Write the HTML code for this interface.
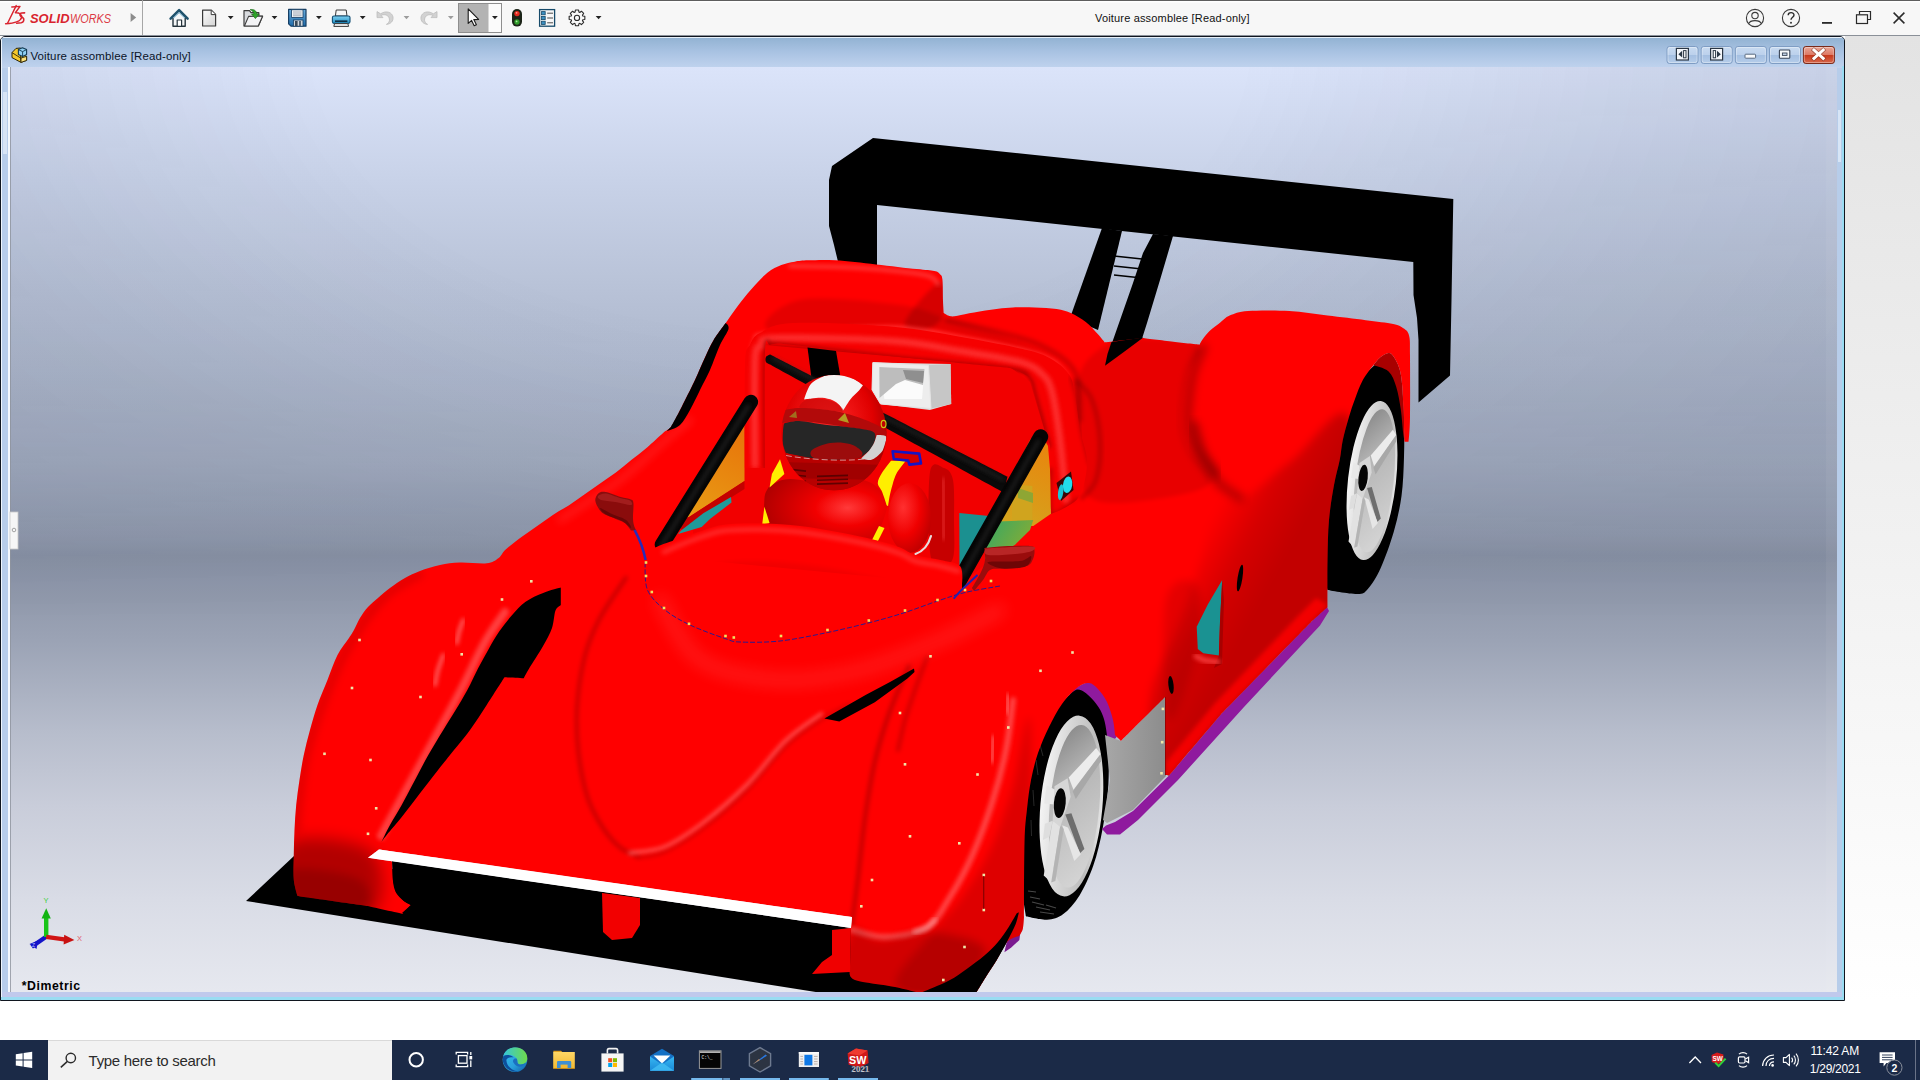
<!DOCTYPE html>
<html lang="en">
<head>
<meta charset="utf-8">
<title>Voiture assomblee [Read-only]</title>
<style>
html,body{margin:0;padding:0;}
body{width:1920px;height:1080px;overflow:hidden;background:#fff;position:relative;font-family:"Liberation Sans",sans-serif;color:#000;}
.abs{position:absolute;}
#topbar{left:0;top:0;width:1920px;height:36px;background:linear-gradient(#ffffff 0,#ffffff 1px,#f7f7f7 2px,#f7f7f7 100%);border-top:1px solid #5e5e5e;box-sizing:border-box;}
#topsep{left:142px;top:0px;width:1px;height:36px;background:#a6a6a6;}
#topline{left:0;top:35px;width:1920px;height:1px;background:#8a9098;}
#rightpanel{left:1845px;top:36px;width:75px;height:965px;background:linear-gradient(#e3e3e3 0%,#f1f1f1 52%,#ffffff 100%);}
#docwin{left:0;top:36px;width:1845px;height:965px;box-sizing:border-box;border:1px solid #10161f;border-radius:5px 5px 0 0;background:#b7cdea;overflow:hidden;}
#doctitle{left:0;top:0;width:1843px;height:31px;background:linear-gradient(#93b3d3 0%,#a8c2e2 45%,#c0d3ee 100%);border-top:1px solid #e8f1fa;border-left:1px solid #e8f1fa;box-sizing:border-box;}
#doctext{left:30.4px;top:48.5px;font-size:11.5px;line-height:14px;color:#0a1428;white-space:nowrap;letter-spacing:0.135px;}
#apptitle{left:1095px;top:11px;font-size:11px;line-height:14px;color:#111;white-space:nowrap;letter-spacing:0.17px;}
#viewtext{left:21.8px;top:979.3px;font-size:12.3px;line-height:14px;font-weight:bold;color:#000;white-space:nowrap;letter-spacing:0.54px;}
#taskbar{left:0;top:1040px;width:1920px;height:40px;background:#1b2a47;}
#search{left:48px;top:1040px;width:344px;height:40px;background:#f2f2f2;border-top:1px solid #d9d9d9;box-sizing:border-box;}
#searchtext{left:88.6px;top:1052px;font-size:15px;line-height:17px;color:#2b2b2b;white-space:nowrap;letter-spacing:-0.3px;}
.clk{color:#fff;font-size:12px;line-height:14px;white-space:nowrap;text-align:center;width:70px;left:1799px;}
svg{position:absolute;left:0;top:0;}
</style>
</head>
<body>
<div id="rightpanel" class="abs"></div>
<div id="topbar" class="abs"></div>
<div id="topsep" class="abs"></div>
<div id="topline" class="abs"></div>
<div id="docwin" class="abs"><div id="doctitle" class="abs"></div></div>

<!--SCENE-->
<svg id="scene" width="1920" height="1080" viewBox="0 0 1920 1080">
<defs>
<linearGradient id="bgv" x1="0" y1="67" x2="0" y2="992" gradientUnits="userSpaceOnUse">
<stop offset="0" stop-color="#dbe4fa"/>
<stop offset="0.122" stop-color="#c8d2e8"/>
<stop offset="0.241" stop-color="#b8c2d7"/>
<stop offset="0.321" stop-color="#aeb8cd"/>
<stop offset="0.427" stop-color="#9fa9bd"/>
<stop offset="0.507" stop-color="#8e97ab"/>
<stop offset="0.528" stop-color="#8790a3"/>
<stop offset="0.62" stop-color="#9ba3b5"/>
<stop offset="0.72" stop-color="#b7bdcc"/>
<stop offset="0.8" stop-color="#c9cdda"/>
<stop offset="0.9" stop-color="#d9dce6"/>
<stop offset="1" stop-color="#e6e8ef"/>
</linearGradient>
<clipPath id="vp"><rect x="10" y="67" width="1827" height="925"/></clipPath>
<radialGradient id="vig" cx="780" cy="40" r="1150" gradientUnits="userSpaceOnUse" gradientTransform="translate(780 40) scale(1 0.62) translate(-780 -40)">
<stop offset="0" stop-color="#101830" stop-opacity="0"/><stop offset="0.4" stop-color="#101830" stop-opacity="0"/><stop offset="0.75" stop-color="#101830" stop-opacity="0.07"/><stop offset="1" stop-color="#101830" stop-opacity="0.10"/></radialGradient>
<linearGradient id="vigm" x1="0" y1="67" x2="0" y2="620" gradientUnits="userSpaceOnUse"><stop offset="0" stop-color="#fff"/><stop offset="0.6" stop-color="#fff" stop-opacity="0.8"/><stop offset="1" stop-color="#fff" stop-opacity="0"/></linearGradient>
<mask id="vigmask" maskUnits="userSpaceOnUse" x="10" y="67" width="1827" height="925"><rect x="10" y="67" width="1827" height="560" fill="url(#vigm)"/></mask>
</defs>
<rect x="8" y="67" width="2" height="925" fill="#f4f8fd"/>
<rect x="1" y="40" width="1" height="957" fill="#eef5fc"/>
<rect x="1" y="997" width="1843" height="3" fill="#9adcf2"/>
<rect x="1842" y="66" width="2" height="934" fill="#9adcf2"/>
<rect x="2" y="992" width="1840" height="5" fill="#c0c9ec"/>
<rect x="10" y="67" width="1827" height="925" fill="url(#bgv)"/>
<rect x="10" y="67" width="1827" height="560" fill="url(#vig)" mask="url(#vigmask)"/>
<rect x="1826" y="67" width="11" height="925" fill="#fff" opacity="0.05"/>
<rect x="10" y="67" width="1" height="925" fill="#8e949e" opacity="0.8"/>
<g clip-path="url(#vp)" id="car">
<defs>
<linearGradient id="gSide" x1="1200" y1="470" x2="1260" y2="640" gradientUnits="userSpaceOnUse">
<stop offset="0" stop-color="#000" stop-opacity="0"/><stop offset="0.45" stop-color="#000" stop-opacity="0.2"/><stop offset="1" stop-color="#000" stop-opacity="0.22"/></linearGradient>
<linearGradient id="gRim" x1="0" y1="0" x2="1" y2="0">
<stop offset="0" stop-color="#f4f4f4"/><stop offset="0.35" stop-color="#d9d9d9"/><stop offset="0.8" stop-color="#bcbcbc"/><stop offset="1" stop-color="#e6e6e6"/></linearGradient>
<linearGradient id="gGray" x1="0" y1="0" x2="1" y2="0"><stop offset="0" stop-color="#a8a8a8"/><stop offset="1" stop-color="#8c8c8c"/></linearGradient>
<radialGradient id="gHelm" cx="0.45" cy="0.4" r="0.6"><stop offset="0" stop-color="#ff2a2a"/><stop offset="0.7" stop-color="#e00000"/><stop offset="1" stop-color="#a80000"/></radialGradient>
</defs>
<path d="M246.0,901.0L294.0,856.0L400.0,870.0L860.0,930.0L1018.9,912.0L1015.5,924.4L1006.7,942.2L996.7,960.0L986.7,975.5L976.0,993.0L822.0,993.0Z" fill="#000" />
<path d="M873.0,138.0L1453.3,199.0L1451.5,300.0L1450.0,375.5L1418.5,402.5L1418.5,340.0L1417.0,318.0L1413.5,295.0L1413.3,262.0L877.0,205.0L877.0,270.0L840.0,270.0L834.0,245.0L829.0,226.0L829.0,180.0L832.0,166.0Z" fill="#000" />
<path d="M1102.0,228.0L1122.0,231.0L1098.0,330.0L1070.0,318.0Z" fill="#000" />
<path d="M1153.0,234.0L1173.0,236.0L1160.0,280.0L1147.0,323.0L1140.0,345.0L1104.0,368.0L1112.0,343.0L1133.0,283.0L1143.0,253.0Z" fill="#000" />
<line x1="1114" y1="256" x2="1142" y2="259" stroke="#000" stroke-width="1.6"/>
<line x1="1114" y1="266" x2="1142" y2="269" stroke="#000" stroke-width="1.6"/>
<line x1="1114" y1="275" x2="1142" y2="278" stroke="#000" stroke-width="1.6"/>
<path d="M1070.0,692.0C1072.5,689.5 1084.2,682.7 1089.0,682.0C1093.8,681.3 1095.8,684.7 1099.0,688.0C1102.2,691.3 1105.5,696.7 1108.0,702.0C1110.5,707.3 1112.6,714.2 1114.0,720.0C1115.4,725.8 1118.2,733.3 1116.5,737.0C1114.8,740.7 1107.1,744.5 1104.0,742.0C1100.9,739.5 1100.0,728.0 1098.0,722.0C1096.0,716.0 1094.3,710.0 1092.0,706.0C1089.7,702.0 1087.0,699.5 1084.0,698.0C1081.0,696.5 1076.3,698.0 1074.0,697.0C1071.7,696.0 1067.5,694.5 1070.0,692.0Z" fill="#8f1a9e" />
<defs><linearGradient id="gDish" x1="0.3" y1="0" x2="0.6" y2="1"><stop offset="0" stop-color="#8a8a8a"/><stop offset="0.35" stop-color="#b6b6b6"/><stop offset="1" stop-color="#d4d4d4"/></linearGradient></defs>
<path d="M1375.5,364.6C1383.2,358.7 1383.0,363.5 1386.0,364.6C1389.0,365.7 1391.1,366.4 1393.7,371.0C1396.3,375.6 1399.8,384.2 1401.5,392.0C1403.2,399.8 1403.6,407.2 1404.0,418.0C1404.4,428.8 1404.4,444.0 1404.0,457.0C1403.6,470.0 1403.2,483.5 1401.5,496.0C1399.8,508.5 1397.2,520.0 1393.7,532.0C1390.2,544.0 1385.0,558.5 1380.7,568.0C1376.4,577.5 1371.7,584.7 1367.8,589.0C1363.9,593.3 1364.1,593.8 1357.4,594.0C1350.7,594.2 1327.6,590.0 1327.6,590.0C1327.6,590.0 1320.0,560.0 1320.0,560.0C1320.0,560.0 1320.0,480.0 1320.0,480.0C1320.0,480.0 1340.0,400.0 1340.0,400.0C1340.0,400.0 1367.8,370.5 1375.5,364.6Z" fill="#000" />
<g transform="rotate(6.40 1372.0 480.5)">
<ellipse cx="1372.0" cy="480.5" rx="24.0" ry="80.0" fill="url(#gRim)"/>
<ellipse cx="1374.4" cy="480.5" rx="19.2" ry="72.0" fill="url(#gDish)"/>
</g>
<path d="M1370.7,455.4L1392.9,429.7L1396.2,434.9L1374.1,466.2Z" fill="#ececec" />
<path d="M1373.4,467.8L1396.2,434.9L1396.2,441.4L1375.6,474.5Z" fill="#a8a8a8" />
<path d="M1367.1,488.0L1371.8,486.9L1380.8,518.5L1377.2,522.1Z" fill="#6e6e6e" />
<path d="M1364.3,497.3L1368.7,499.4L1377.9,523.0L1372.6,528.9Z" fill="#e6e6e6" />
<path d="M1357.0,493.3L1362.9,497.2L1354.1,547.7L1348.5,541.5Z" fill="#e2e2e2" />
<path d="M1362.9,497.2L1365.4,500.7L1357.4,546.5L1354.1,547.7Z" fill="#b4b4b4" />
<path d="M1353.5,462.3L1360.3,466.3L1358.9,479.0L1351.0,478.1Z" fill="#e8e8e8" />
<path d="M1351.0,495.9L1357.0,493.3L1354.0,507.5L1348.9,510.1Z" fill="#dedede" />
<path d="M1359.5,463.0L1369.9,456.1L1371.7,472.4L1362.7,498.8L1357.0,493.3Z" fill="#d6d6d6" />
<ellipse cx="1363.1" cy="477.9" rx="4.6" ry="13.2" fill="#050505" transform="rotate(6.4 1363.1 477.9)"/>
<path d="M1404.6,441.7C1404.6,441.7 1404.3,434.1 1403.9,424.9C1403.5,415.7 1403.1,396.1 1402.3,386.7C1401.5,377.3 1400.8,373.4 1399.3,368.3C1397.8,363.2 1395.0,358.7 1393.2,356.1C1391.4,353.6 1390.8,352.8 1388.6,353.0C1386.4,353.2 1382.5,355.4 1380.0,357.5C1377.5,359.6 1373.3,365.3 1373.3,365.3C1373.3,365.3 1384.8,367.8 1388.6,371.4C1392.4,375.0 1394.2,380.3 1396.2,386.7C1398.2,393.1 1399.7,402.0 1400.8,409.6C1401.9,417.2 1402.5,427.1 1403.1,432.5C1403.7,437.9 1404.6,441.7 1404.6,441.7Z" fill="#a80000" />
<path d="M1081.8,690.4C1087.2,692.7 1096.0,702.1 1100.3,710.0C1104.5,717.9 1105.9,725.5 1107.3,737.9C1108.7,750.3 1109.2,769.1 1108.4,784.2C1107.6,799.3 1105.2,814.8 1102.7,828.3C1100.2,841.8 1097.3,854.1 1093.4,865.3C1089.5,876.5 1084.5,887.3 1079.5,895.4C1074.5,903.5 1068.7,910.0 1063.3,914.0C1057.9,918.0 1053.2,919.3 1047.0,919.7C1040.8,920.1 1026.0,916.3 1026.0,916.3C1026.0,916.3 1020.0,880.0 1020.0,880.0C1020.0,880.0 1020.0,800.0 1020.0,800.0C1020.0,800.0 1040.0,730.0 1040.0,730.0C1040.0,730.0 1060.9,702.8 1067.9,696.2C1074.9,689.6 1076.4,688.1 1081.8,690.4Z" fill="#000" />
<g transform="rotate(5.10 1071.4 806.0)">
<ellipse cx="1071.4" cy="806.0" rx="31.0" ry="90.7" fill="url(#gRim)"/>
<ellipse cx="1074.5" cy="806.0" rx="24.8" ry="81.6" fill="url(#gDish)"/>
</g>
<path d="M1068.7,777.5L1096.2,748.1L1100.6,754.0L1073.5,789.8Z" fill="#ececec" />
<path d="M1072.7,791.5L1100.6,754.0L1100.9,761.3L1075.8,799.1Z" fill="#a8a8a8" />
<path d="M1065.3,814.6L1071.4,813.3L1084.4,849.0L1079.9,853.2Z" fill="#6e6e6e" />
<path d="M1062.2,825.2L1067.9,827.5L1080.8,854.2L1074.3,860.9Z" fill="#e6e6e6" />
<path d="M1052.7,820.7L1060.4,825.0L1051.2,882.5L1043.7,875.5Z" fill="#e2e2e2" />
<path d="M1060.4,825.0L1063.7,829.0L1055.4,881.1L1051.2,882.5Z" fill="#b4b4b4" />
<path d="M1046.8,785.6L1055.7,790.0L1054.4,804.5L1044.2,803.6Z" fill="#e8e8e8" />
<path d="M1044.9,823.7L1052.7,820.7L1049.4,836.8L1042.9,839.9Z" fill="#dedede" />
<path d="M1054.5,786.3L1067.6,778.3L1070.7,796.8L1060.2,826.9L1052.7,820.7Z" fill="#d6d6d6" />
<ellipse cx="1059.8" cy="803.1" rx="5.9" ry="15.0" fill="#050505" transform="rotate(5.1 1059.8 803.1)"/>
<path d="M1030.0,897.0 L1040.0,899.0" stroke="#5a5a5a" stroke-width="1.1" opacity="0.8"/>
<path d="M1032.0,902.0 L1044.0,905.0" stroke="#5a5a5a" stroke-width="1.1" opacity="0.8"/>
<path d="M1036.0,907.0 L1050.0,910.0" stroke="#5a5a5a" stroke-width="1.1" opacity="0.8"/>
<path d="M1040.0,912.0 L1054.0,914.0" stroke="#5a5a5a" stroke-width="1.1" opacity="0.8"/>
<path d="M1028.0,891.0 L1036.0,892.0" stroke="#5a5a5a" stroke-width="1.1" opacity="0.8"/>
<path d="M1046.0,905.0 L1056.0,908.0" stroke="#5a5a5a" stroke-width="1.1" opacity="0.8"/>
<path d="M1036.0,760.0 L1038.0,775.0" stroke="#3a3a3a" stroke-width="1" opacity="0.7"/>
<path d="M1033.0,790.0 L1034.0,806.0" stroke="#3a3a3a" stroke-width="1" opacity="0.7"/>
<path d="M1031.0,820.0 L1031.5,836.0" stroke="#3a3a3a" stroke-width="1" opacity="0.7"/>
<path d="M1040.0,745.0 L1043.0,756.0" stroke="#3a3a3a" stroke-width="1" opacity="0.7"/>
<path d="M1105.0,735.0L1121.0,741.0L1165.0,696.0L1166.0,776.0L1133.0,810.0L1107.0,823.0L1103.0,820.0L1110.0,780.0Z" fill="url(#gGray)" />
<path d="M1327.0,607.0L1311.0,622.0L1222.0,713.0L1169.0,775.5L1133.0,811.0L1115.0,822.0L1106.0,825.5L1102.0,829.0L1107.0,834.5L1120.0,834.5L1138.0,820.0L1178.0,780.0L1244.0,707.0L1320.0,625.5L1329.0,611.0Z" fill="#8f1a9e" />
<path d="M1020.5,931.0L1019.4,940.0L1011.0,947.8L1004.4,952.2L1006.7,942.2L1015.0,926.0Z" fill="#7a1a90" />
<clipPath id="bodyclip"><path d="M794.8,261.7C799.3,260.9 801.5,260.5 808.3,260.3C815.1,260.1 824.1,259.6 835.4,260.3C846.7,261.0 862.5,262.9 876.0,264.4C889.5,265.9 907.0,268.0 916.7,269.1C926.4,270.2 930.5,270.3 934.3,271.1C938.1,271.9 938.4,272.5 939.7,273.9C941.1,275.3 941.9,274.8 942.4,279.3C942.9,283.8 942.8,295.3 943.0,300.9C943.2,306.5 943.7,313.1 943.7,313.1C943.7,313.1 947.8,315.6 947.8,315.6C947.8,315.6 951.0,316.7 954.6,316.3C958.2,315.9 963.1,314.4 969.2,313.3C975.3,312.2 983.7,310.7 991.0,309.7C998.3,308.7 1005.6,307.9 1012.9,307.5C1020.2,307.1 1027.5,307.2 1034.8,307.5C1042.1,307.8 1050.6,308.0 1056.7,309.0C1062.8,310.0 1066.5,311.1 1071.3,313.3C1076.1,315.5 1081.4,318.7 1085.8,322.1C1090.2,325.5 1094.3,330.4 1097.5,333.8C1100.7,337.2 1104.8,342.5 1104.8,342.5C1104.8,342.5 1142.7,338.1 1142.7,338.1C1142.7,338.1 1163.8,340.7 1173.3,341.8C1182.8,342.9 1199.6,344.7 1199.6,344.7C1199.6,344.7 1200.8,341.9 1202.5,339.6C1204.2,337.3 1206.9,333.6 1209.8,330.8C1212.7,328.0 1216.7,325.3 1220.0,322.8C1223.3,320.3 1225.0,317.6 1229.7,315.6C1234.4,313.6 1238.1,311.8 1248.0,311.0C1257.9,310.2 1276.0,310.2 1289.3,311.0C1302.5,311.8 1314.8,314.1 1327.5,315.6C1340.2,317.1 1354.8,318.8 1365.7,320.2C1376.7,321.6 1386.8,322.6 1393.2,324.0C1399.6,325.4 1401.2,326.6 1403.9,328.6C1406.6,330.6 1408.2,331.6 1409.2,336.2C1410.2,340.8 1409.9,342.5 1410.0,356.0C1410.1,369.5 1410.2,402.7 1410.0,417.0C1409.8,431.3 1408.5,441.7 1408.5,441.7C1408.5,441.7 1404.6,441.7 1404.6,441.7C1404.6,441.7 1404.3,434.1 1403.9,424.9C1403.5,415.7 1403.1,396.1 1402.3,386.7C1401.5,377.3 1400.8,373.4 1399.3,368.3C1397.8,363.2 1395.0,358.7 1393.2,356.1C1391.4,353.6 1390.8,352.8 1388.6,353.0C1386.4,353.2 1382.5,355.4 1380.0,357.5C1377.5,359.6 1373.3,365.3 1373.3,365.3C1373.3,365.3 1365.6,374.9 1362.6,380.5C1359.5,386.1 1357.3,392.8 1355.0,398.9C1352.7,405.0 1350.9,410.3 1348.9,417.2C1346.9,424.1 1344.3,433.0 1342.8,440.1C1341.3,447.2 1341.2,452.5 1339.7,460.0C1338.2,467.5 1335.8,475.0 1334.0,485.0C1332.2,495.0 1330.1,507.5 1329.0,520.0C1327.9,532.5 1327.8,545.5 1327.5,560.0C1327.2,574.5 1327.5,607.0 1327.5,607.0C1327.5,607.0 1311.0,622.0 1311.0,622.0C1311.0,622.0 1222.0,713.0 1222.0,713.0C1222.0,713.0 1169.0,775.5 1169.0,775.5C1169.0,775.5 1165.0,775.0 1165.0,775.0C1165.0,775.0 1165.0,697.0 1165.0,697.0C1165.0,697.0 1121.0,741.0 1121.0,741.0C1121.0,741.0 1115.0,735.0 1115.0,735.0C1115.0,735.0 1114.3,725.5 1113.0,720.0C1111.7,714.5 1109.5,707.2 1107.0,702.0C1104.5,696.8 1101.0,692.2 1098.0,689.0C1095.0,685.8 1092.3,683.3 1089.0,683.0C1085.7,682.7 1082.5,683.5 1078.0,687.0C1073.5,690.5 1066.8,697.3 1062.0,704.0C1057.2,710.7 1053.0,718.8 1049.0,727.0C1045.0,735.2 1041.0,744.2 1038.0,753.0C1035.0,761.8 1032.8,770.7 1031.0,780.0C1029.2,789.3 1028.1,798.7 1027.0,809.0C1025.9,819.3 1025.0,824.0 1024.5,842.0C1024.0,860.0 1024.0,916.7 1024.0,916.7C1024.0,916.7 1023.6,925.8 1022.8,929.0C1022.0,932.2 1019.0,936.0 1019.0,936.0C1019.0,936.0 1010.4,938.2 1006.7,942.2C1003.0,946.2 1000.0,954.5 996.7,960.0C993.4,965.5 990.2,970.0 986.7,975.5C983.2,981.0 976.0,993.0 976.0,993.0C976.0,993.0 920.0,993.0 920.0,993.0C920.0,993.0 905.8,989.2 895.0,987.0C884.2,984.8 862.5,982.8 855.0,980.0C847.5,977.2 850.0,970.0 850.0,970.0C850.0,970.0 851.0,928.0 851.0,928.0C851.0,928.0 852.0,917.0 852.0,917.0C852.0,917.0 379.0,849.5 379.0,849.5C379.0,849.5 368.0,857.8 368.0,857.8C368.0,857.8 392.5,861.5 392.5,861.5C392.5,861.5 392.4,875.8 393.0,881.0C393.6,886.2 394.2,889.2 396.0,892.5C397.8,895.8 401.2,898.9 403.8,901.0C406.2,903.1 411.0,905.0 411.0,905.0C411.0,905.0 402.5,913.8 402.5,913.8C402.5,913.8 367.5,906.0 367.5,906.0C367.5,906.0 297.5,896.0 297.5,896.0C297.5,896.0 294.4,886.8 293.8,880.0C293.1,873.2 293.6,863.3 293.8,855.0C293.9,846.7 294.1,838.3 294.5,830.0C294.9,821.7 295.4,813.3 296.2,805.0C297.1,796.7 298.2,788.3 299.5,780.0C300.8,771.7 302.0,763.3 303.8,755.0C305.5,746.7 307.7,738.3 310.0,730.0C312.3,721.7 314.6,713.3 317.5,705.0C320.4,696.7 324.2,688.3 327.5,680.0C330.8,671.7 333.9,662.0 337.5,655.0C341.1,648.0 346.2,642.2 349.0,638.0C351.8,633.8 352.2,633.3 354.0,630.0C355.8,626.7 357.7,621.8 360.0,618.0C362.3,614.2 365.0,610.3 368.0,607.0C371.0,603.7 374.3,601.2 378.0,598.0C381.7,594.8 385.5,591.3 390.0,588.0C394.5,584.7 400.0,580.8 405.0,578.0C410.0,575.2 414.2,573.2 420.0,571.0C425.8,568.8 433.3,566.4 440.0,565.0C446.7,563.6 452.2,562.8 460.0,562.5C467.8,562.2 480.3,564.0 486.7,563.3C493.1,562.6 495.1,560.6 498.3,558.3C501.5,556.0 501.8,553.1 505.7,549.5C509.6,545.9 516.2,540.8 521.5,536.9C526.8,533.0 532.0,529.6 537.2,525.9C542.4,522.2 547.6,518.3 552.9,514.9C558.1,511.5 563.5,508.8 568.7,505.4C574.0,502.0 579.2,498.1 584.4,494.4C589.6,490.7 594.9,487.1 600.1,483.4C605.4,479.7 610.6,476.3 615.9,472.4C621.1,468.5 626.4,464.0 631.6,459.8C636.9,455.6 642.1,451.7 647.4,447.2C652.6,442.7 659.2,436.4 663.1,433.0C667.0,429.6 668.4,430.2 671.0,426.8C673.6,423.4 676.4,417.1 678.8,412.6C681.1,408.1 682.4,405.4 685.1,400.0C687.8,394.6 691.7,387.1 695.0,380.0C698.3,372.9 701.9,364.1 705.0,357.5C708.1,350.9 709.8,346.2 713.5,340.2C717.2,334.1 722.5,327.5 727.0,321.2C731.5,314.9 736.1,308.2 740.6,302.3C745.1,296.4 749.7,291.0 754.2,286.0C758.7,281.0 763.2,276.0 767.7,272.5C772.2,269.0 776.8,266.8 781.3,265.0C785.8,263.2 790.3,262.5 794.8,261.7Z"/></clipPath>
<filter id="b2" x="-20%" y="-20%" width="140%" height="140%"><feGaussianBlur stdDeviation="2"/></filter>
<filter id="b4" x="-20%" y="-20%" width="140%" height="140%"><feGaussianBlur stdDeviation="4"/></filter>
<filter id="b8" x="-30%" y="-30%" width="160%" height="160%"><feGaussianBlur stdDeviation="8"/></filter>
<path d="M794.8,261.7C799.3,260.9 801.5,260.5 808.3,260.3C815.1,260.1 824.1,259.6 835.4,260.3C846.7,261.0 862.5,262.9 876.0,264.4C889.5,265.9 907.0,268.0 916.7,269.1C926.4,270.2 930.5,270.3 934.3,271.1C938.1,271.9 938.4,272.5 939.7,273.9C941.1,275.3 941.9,274.8 942.4,279.3C942.9,283.8 942.8,295.3 943.0,300.9C943.2,306.5 943.7,313.1 943.7,313.1C943.7,313.1 947.8,315.6 947.8,315.6C947.8,315.6 951.0,316.7 954.6,316.3C958.2,315.9 963.1,314.4 969.2,313.3C975.3,312.2 983.7,310.7 991.0,309.7C998.3,308.7 1005.6,307.9 1012.9,307.5C1020.2,307.1 1027.5,307.2 1034.8,307.5C1042.1,307.8 1050.6,308.0 1056.7,309.0C1062.8,310.0 1066.5,311.1 1071.3,313.3C1076.1,315.5 1081.4,318.7 1085.8,322.1C1090.2,325.5 1094.3,330.4 1097.5,333.8C1100.7,337.2 1104.8,342.5 1104.8,342.5C1104.8,342.5 1142.7,338.1 1142.7,338.1C1142.7,338.1 1163.8,340.7 1173.3,341.8C1182.8,342.9 1199.6,344.7 1199.6,344.7C1199.6,344.7 1200.8,341.9 1202.5,339.6C1204.2,337.3 1206.9,333.6 1209.8,330.8C1212.7,328.0 1216.7,325.3 1220.0,322.8C1223.3,320.3 1225.0,317.6 1229.7,315.6C1234.4,313.6 1238.1,311.8 1248.0,311.0C1257.9,310.2 1276.0,310.2 1289.3,311.0C1302.5,311.8 1314.8,314.1 1327.5,315.6C1340.2,317.1 1354.8,318.8 1365.7,320.2C1376.7,321.6 1386.8,322.6 1393.2,324.0C1399.6,325.4 1401.2,326.6 1403.9,328.6C1406.6,330.6 1408.2,331.6 1409.2,336.2C1410.2,340.8 1409.9,342.5 1410.0,356.0C1410.1,369.5 1410.2,402.7 1410.0,417.0C1409.8,431.3 1408.5,441.7 1408.5,441.7C1408.5,441.7 1404.6,441.7 1404.6,441.7C1404.6,441.7 1404.3,434.1 1403.9,424.9C1403.5,415.7 1403.1,396.1 1402.3,386.7C1401.5,377.3 1400.8,373.4 1399.3,368.3C1397.8,363.2 1395.0,358.7 1393.2,356.1C1391.4,353.6 1390.8,352.8 1388.6,353.0C1386.4,353.2 1382.5,355.4 1380.0,357.5C1377.5,359.6 1373.3,365.3 1373.3,365.3C1373.3,365.3 1365.6,374.9 1362.6,380.5C1359.5,386.1 1357.3,392.8 1355.0,398.9C1352.7,405.0 1350.9,410.3 1348.9,417.2C1346.9,424.1 1344.3,433.0 1342.8,440.1C1341.3,447.2 1341.2,452.5 1339.7,460.0C1338.2,467.5 1335.8,475.0 1334.0,485.0C1332.2,495.0 1330.1,507.5 1329.0,520.0C1327.9,532.5 1327.8,545.5 1327.5,560.0C1327.2,574.5 1327.5,607.0 1327.5,607.0C1327.5,607.0 1311.0,622.0 1311.0,622.0C1311.0,622.0 1222.0,713.0 1222.0,713.0C1222.0,713.0 1169.0,775.5 1169.0,775.5C1169.0,775.5 1165.0,775.0 1165.0,775.0C1165.0,775.0 1165.0,697.0 1165.0,697.0C1165.0,697.0 1121.0,741.0 1121.0,741.0C1121.0,741.0 1115.0,735.0 1115.0,735.0C1115.0,735.0 1114.3,725.5 1113.0,720.0C1111.7,714.5 1109.5,707.2 1107.0,702.0C1104.5,696.8 1101.0,692.2 1098.0,689.0C1095.0,685.8 1092.3,683.3 1089.0,683.0C1085.7,682.7 1082.5,683.5 1078.0,687.0C1073.5,690.5 1066.8,697.3 1062.0,704.0C1057.2,710.7 1053.0,718.8 1049.0,727.0C1045.0,735.2 1041.0,744.2 1038.0,753.0C1035.0,761.8 1032.8,770.7 1031.0,780.0C1029.2,789.3 1028.1,798.7 1027.0,809.0C1025.9,819.3 1025.0,824.0 1024.5,842.0C1024.0,860.0 1024.0,916.7 1024.0,916.7C1024.0,916.7 1023.6,925.8 1022.8,929.0C1022.0,932.2 1019.0,936.0 1019.0,936.0C1019.0,936.0 1010.4,938.2 1006.7,942.2C1003.0,946.2 1000.0,954.5 996.7,960.0C993.4,965.5 990.2,970.0 986.7,975.5C983.2,981.0 976.0,993.0 976.0,993.0C976.0,993.0 920.0,993.0 920.0,993.0C920.0,993.0 905.8,989.2 895.0,987.0C884.2,984.8 862.5,982.8 855.0,980.0C847.5,977.2 850.0,970.0 850.0,970.0C850.0,970.0 851.0,928.0 851.0,928.0C851.0,928.0 852.0,917.0 852.0,917.0C852.0,917.0 379.0,849.5 379.0,849.5C379.0,849.5 368.0,857.8 368.0,857.8C368.0,857.8 392.5,861.5 392.5,861.5C392.5,861.5 392.4,875.8 393.0,881.0C393.6,886.2 394.2,889.2 396.0,892.5C397.8,895.8 401.2,898.9 403.8,901.0C406.2,903.1 411.0,905.0 411.0,905.0C411.0,905.0 402.5,913.8 402.5,913.8C402.5,913.8 367.5,906.0 367.5,906.0C367.5,906.0 297.5,896.0 297.5,896.0C297.5,896.0 294.4,886.8 293.8,880.0C293.1,873.2 293.6,863.3 293.8,855.0C293.9,846.7 294.1,838.3 294.5,830.0C294.9,821.7 295.4,813.3 296.2,805.0C297.1,796.7 298.2,788.3 299.5,780.0C300.8,771.7 302.0,763.3 303.8,755.0C305.5,746.7 307.7,738.3 310.0,730.0C312.3,721.7 314.6,713.3 317.5,705.0C320.4,696.7 324.2,688.3 327.5,680.0C330.8,671.7 333.9,662.0 337.5,655.0C341.1,648.0 346.2,642.2 349.0,638.0C351.8,633.8 352.2,633.3 354.0,630.0C355.8,626.7 357.7,621.8 360.0,618.0C362.3,614.2 365.0,610.3 368.0,607.0C371.0,603.7 374.3,601.2 378.0,598.0C381.7,594.8 385.5,591.3 390.0,588.0C394.5,584.7 400.0,580.8 405.0,578.0C410.0,575.2 414.2,573.2 420.0,571.0C425.8,568.8 433.3,566.4 440.0,565.0C446.7,563.6 452.2,562.8 460.0,562.5C467.8,562.2 480.3,564.0 486.7,563.3C493.1,562.6 495.1,560.6 498.3,558.3C501.5,556.0 501.8,553.1 505.7,549.5C509.6,545.9 516.2,540.8 521.5,536.9C526.8,533.0 532.0,529.6 537.2,525.9C542.4,522.2 547.6,518.3 552.9,514.9C558.1,511.5 563.5,508.8 568.7,505.4C574.0,502.0 579.2,498.1 584.4,494.4C589.6,490.7 594.9,487.1 600.1,483.4C605.4,479.7 610.6,476.3 615.9,472.4C621.1,468.5 626.4,464.0 631.6,459.8C636.9,455.6 642.1,451.7 647.4,447.2C652.6,442.7 659.2,436.4 663.1,433.0C667.0,429.6 668.4,430.2 671.0,426.8C673.6,423.4 676.4,417.1 678.8,412.6C681.1,408.1 682.4,405.4 685.1,400.0C687.8,394.6 691.7,387.1 695.0,380.0C698.3,372.9 701.9,364.1 705.0,357.5C708.1,350.9 709.8,346.2 713.5,340.2C717.2,334.1 722.5,327.5 727.0,321.2C731.5,314.9 736.1,308.2 740.6,302.3C745.1,296.4 749.7,291.0 754.2,286.0C758.7,281.0 763.2,276.0 767.7,272.5C772.2,269.0 776.8,266.8 781.3,265.0C785.8,263.2 790.3,262.5 794.8,261.7Z" fill="#ff0000" />
<g clip-path="url(#bodyclip)" id="shade">
<linearGradient id="gSide2" x1="1188" y1="560" x2="1262" y2="600" gradientUnits="userSpaceOnUse"><stop offset="0" stop-color="#000" stop-opacity="0"/><stop offset="0.5" stop-color="#000" stop-opacity="0.16"/><stop offset="1" stop-color="#000" stop-opacity="0.24"/></linearGradient>
<path d="M1196.0,470.0C1201.2,470.0 1220.3,501.3 1236.0,500.0C1251.7,498.7 1271.0,475.3 1290.0,462.0C1309.0,448.7 1341.7,393.7 1350.0,420.0C1358.3,446.3 1370.8,558.3 1340.0,620.0C1309.2,681.7 1196.7,776.7 1165.0,790.0C1133.3,803.3 1148.8,725.0 1150.0,700.0C1151.2,675.0 1165.3,658.3 1172.0,640.0C1178.7,621.7 1184.5,606.7 1190.0,590.0C1195.5,573.3 1202.5,555.0 1205.0,540.0C1207.5,525.0 1206.5,511.7 1205.0,500.0C1203.5,488.3 1190.8,470.0 1196.0,470.0Z" fill="url(#gSide2)" filter="url(#b4)"/>
<path d="M1166.0,600.0C1170.7,577.5 1190.8,576.7 1196.0,585.0C1201.2,593.3 1201.7,627.5 1197.0,650.0C1192.3,672.5 1173.2,728.3 1168.0,720.0C1162.8,711.7 1161.3,622.5 1166.0,600.0Z" fill="#000" opacity="0.1" filter="url(#b4)"/>
<path d="M1203.0,348.0C1201.3,352.2 1195.5,363.2 1193.0,373.0C1190.5,382.8 1188.8,397.7 1188.0,407.0C1187.2,416.3 1186.7,421.7 1188.0,429.0C1189.3,436.3 1192.7,444.5 1196.0,451.0C1199.3,457.5 1204.0,462.5 1208.0,468.0C1212.0,473.5 1214.7,479.0 1220.0,484.0C1225.3,489.0 1236.7,495.7 1240.0,498.0" fill="none" stroke="#7a0000" stroke-width="9" opacity="0.5" filter="url(#b4)" stroke-linecap="round"/>
<path d="M1194.0,425.0C1195.3,429.5 1198.3,443.8 1202.0,452.0C1205.7,460.2 1213.7,470.3 1216.0,474.0" fill="none" stroke="#500000" stroke-width="9" opacity="0.45" filter="url(#b4)" stroke-linecap="round"/>
<path d="M1078.0,381.0C1082.2,360.3 1094.2,353.0 1105.0,346.0C1115.8,339.0 1127.5,339.0 1143.0,339.0C1158.5,339.0 1190.5,340.3 1198.0,346.0C1205.5,351.7 1190.7,362.8 1188.0,373.0C1185.3,383.2 1183.0,397.7 1182.0,407.0C1181.0,416.3 1180.7,421.7 1182.0,429.0C1183.3,436.3 1185.5,441.8 1190.0,451.0C1194.5,460.2 1215.7,475.8 1209.0,484.0C1202.3,492.2 1169.0,497.3 1150.0,500.0C1131.0,502.7 1106.7,505.0 1095.0,500.0C1083.3,495.0 1082.8,489.8 1080.0,470.0C1077.2,450.2 1073.8,401.7 1078.0,381.0Z" fill="#000" opacity="0.09" filter="url(#b2)"/>
<path d="M947.0,320.0C954.2,321.7 974.5,325.8 990.0,330.0C1005.5,334.2 1025.8,338.0 1040.0,345.0C1054.2,352.0 1068.3,359.5 1075.0,372.0C1081.7,384.5 1079.2,412.0 1080.0,420.0" fill="none" stroke="#7a0000" stroke-width="5" opacity="0.35" filter="url(#b2)" stroke-linecap="round"/>
<path d="M1078.0,382.0C1080.3,385.0 1088.3,390.3 1092.0,400.0C1095.7,409.7 1099.3,426.7 1100.0,440.0C1100.7,453.3 1099.0,470.3 1096.0,480.0C1093.0,489.7 1084.3,495.0 1082.0,498.0" fill="none" stroke="#7a0000" stroke-width="4" opacity="0.4" filter="url(#b2)" stroke-linecap="round"/>
<path d="M905.0,322.0C907.5,314.0 933.5,283.3 940.0,282.0C946.5,280.7 946.5,306.0 944.0,314.0C941.5,322.0 931.5,328.7 925.0,330.0C918.5,331.3 902.5,330.0 905.0,322.0Z" fill="#000" opacity="0.16" filter="url(#b2)"/>
<path d="M790.0,266.0C801.7,266.3 837.5,266.5 860.0,268.0C882.5,269.5 912.0,272.3 925.0,275.0C938.0,277.7 935.8,282.5 938.0,284.0" fill="none" stroke="#ff6a6a" stroke-width="4" opacity="0.5" filter="url(#b2)" stroke-linecap="round"/>
<path d="M770.0,330.0C754.5,325.8 778.3,304.2 800.0,300.0C821.7,295.8 875.8,302.0 900.0,305.0C924.2,308.0 928.3,313.0 945.0,318.0C961.7,323.0 980.8,328.3 1000.0,335.0C1019.2,341.7 1053.3,355.2 1060.0,358.0C1066.7,360.8 1056.7,356.0 1040.0,352.0C1023.3,348.0 984.5,338.5 960.0,334.0C935.5,329.5 924.7,325.7 893.0,325.0C861.3,324.3 785.5,334.2 770.0,330.0Z" fill="#000" opacity="0.1" filter="url(#b2)"/>
<path d="M768.0,347.0C790.0,348.7 859.7,353.5 900.0,357.0C940.3,360.5 988.3,364.8 1010.0,368.0C1031.7,371.2 1025.7,372.0 1030.0,376.0C1034.3,380.0 1033.0,381.3 1036.0,392.0C1039.0,402.7 1046.0,432.0 1048.0,440.0" fill="none" stroke="#7a0000" stroke-width="5" opacity="0.6" filter="url(#b2)" stroke-linecap="round"/>
<path d="M767.0,347.0C767.0,355.8 767.0,380.3 767.0,400.0C767.0,419.7 767.0,454.2 767.0,465.0" fill="none" stroke="#7a0000" stroke-width="5" opacity="0.5" filter="url(#b2)" stroke-linecap="round"/>
<path d="M1076.0,380.0C1076.3,388.3 1077.3,415.0 1078.0,430.0C1078.7,445.0 1081.0,458.3 1080.0,470.0C1079.0,481.7 1073.3,495.0 1072.0,500.0" fill="none" stroke="#7a0000" stroke-width="4" opacity="0.4" filter="url(#b2)" stroke-linecap="round"/>
<path d="M752.0,352.0C752.7,350.0 753.0,343.0 756.0,340.0C759.0,337.0 747.2,336.0 770.0,334.0C792.8,332.0 861.3,327.3 893.0,328.0C924.7,328.7 937.7,334.0 960.0,338.0C982.3,342.0 1011.5,348.0 1027.0,352.0C1042.5,356.0 1046.5,358.0 1053.0,362.0C1059.5,366.0 1063.8,373.7 1066.0,376.0" fill="none" stroke="#ff6a6a" stroke-width="4" opacity="0.55" filter="url(#b2)" stroke-linecap="round"/>
<path d="M749.0,360.0C749.0,370.0 749.0,403.0 749.0,420.0C749.0,437.0 749.0,455.0 749.0,462.0" fill="none" stroke="#ff6a6a" stroke-width="4" opacity="0.45" filter="url(#b2)" stroke-linecap="round"/>
<path d="M626.0,577.8C621.5,584.7 606.2,606.0 599.3,619.3C592.4,632.6 588.1,643.0 584.4,657.8C580.7,672.6 578.0,692.2 577.0,708.0C576.0,723.8 576.8,737.8 578.5,752.6C580.2,767.4 583.4,784.6 587.4,797.0C591.4,809.4 596.8,818.3 602.2,826.7C607.6,835.1 614.1,842.5 620.0,847.4C625.9,852.3 634.8,854.8 637.8,856.3" fill="none" stroke="#7a0000" stroke-width="3.5" opacity="0.45" filter="url(#b2)" stroke-linecap="round"/>
<path d="M630.0,853.0C635.7,852.0 652.2,852.0 664.4,847.0C676.6,842.0 689.2,833.4 703.0,823.0C716.8,812.6 733.6,798.2 747.4,784.5C761.2,770.8 773.6,752.2 786.0,740.5C798.4,728.8 815.6,718.4 821.5,714.0" fill="none" stroke="#ff7070" stroke-width="4" opacity="0.7" filter="url(#b2)" stroke-linecap="round"/>
<path d="M637.8,857.5C642.2,856.6 653.5,856.8 664.4,852.0C675.3,847.2 689.2,838.8 703.0,828.5C716.8,818.2 733.6,803.8 747.4,790.0C761.2,776.2 773.6,757.8 786.0,746.0C798.4,734.2 810.8,726.5 821.5,719.5C832.2,712.5 845.2,706.6 850.0,704.0" fill="none" stroke="#7a0000" stroke-width="2.5" opacity="0.35" filter="url(#b2)" stroke-linecap="round"/>
<path d="M909.0,666.0C905.8,673.5 895.7,695.2 890.0,711.0C884.3,726.8 879.2,743.2 875.0,761.0C870.8,778.8 867.8,798.5 865.0,818.0C862.2,837.5 860.2,860.3 858.0,878.0C855.8,895.7 853.0,916.3 852.0,924.0" fill="none" stroke="#7a0000" stroke-width="4" opacity="0.45" filter="url(#b2)" stroke-linecap="round"/>
<path d="M1013.0,700.0C1011.8,708.3 1009.5,732.8 1006.0,750.0C1002.5,767.2 997.7,785.3 992.0,803.0C986.3,820.7 979.0,840.3 972.0,856.0C965.0,871.7 957.5,885.2 950.0,897.0C942.5,908.8 937.8,920.3 927.0,927.0C916.2,933.7 897.5,936.5 885.0,937.0C872.5,937.5 857.5,931.2 852.0,930.0" fill="none" stroke="#ff6a6a" stroke-width="6" opacity="0.65" filter="url(#b2)" stroke-linecap="round"/>
<path d="M935.0,920.0C933.7,921.3 930.3,926.0 927.0,928.0C923.7,930.0 917.0,931.3 915.0,932.0" fill="none" stroke="#ff9a9a" stroke-width="5" opacity="0.7" filter="url(#b2)" stroke-linecap="round"/>
<path d="M1030.0,720.0C1027.0,701.7 1018.7,768.3 1012.0,790.0C1005.3,811.7 998.7,831.7 990.0,850.0C981.3,868.3 970.0,885.8 960.0,900.0C950.0,914.2 940.0,920.0 930.0,935.0C920.0,950.0 883.3,980.8 900.0,990.0C916.7,999.2 1008.3,1005.0 1030.0,990.0C1051.7,975.0 1030.0,945.0 1030.0,900.0C1030.0,855.0 1033.0,738.3 1030.0,720.0Z" fill="#000" opacity="0.13" filter="url(#b4)"/>
<path d="M852.0,930.0C857.0,922.5 867.0,939.7 880.0,940.0C893.0,940.3 912.5,930.3 930.0,932.0C947.5,933.7 983.3,939.5 985.0,950.0C986.7,960.5 962.5,989.2 940.0,995.0C917.5,1000.8 864.7,995.8 850.0,985.0C835.3,974.2 847.0,937.5 852.0,930.0Z" fill="#000" opacity="0.18" filter="url(#b4)"/>
<path d="M1008.0,695.0C1007.9,696.5 1007.7,701.0 1007.5,704.0C1007.3,707.0 1006.8,711.5 1006.7,713.0" fill="none" stroke="#ff8080" stroke-width="3.5" opacity="0.8" filter="url(#b2)" stroke-linecap="round"/>
<path d="M993.5,737.0C993.4,739.2 992.9,745.9 992.6,750.0C992.3,754.1 991.9,759.8 991.7,761.7" fill="none" stroke="#ff8080" stroke-width="3.5" opacity="0.8" filter="url(#b2)" stroke-linecap="round"/>
<path d="M926.7,658.0C924.8,663.3 918.6,679.7 915.0,690.0C911.4,700.3 907.8,710.0 905.0,720.0C902.2,730.0 899.2,745.0 898.0,750.0" fill="none" stroke="#7a0000" stroke-width="4" opacity="0.35" filter="url(#b2)" stroke-linecap="round"/>
<path d="M505.0,612.0C501.7,617.0 492.2,629.3 485.0,642.0C477.8,654.7 470.2,672.3 462.0,688.0C453.8,703.7 445.5,718.7 436.0,736.0C426.5,753.3 414.2,775.3 405.0,792.0C395.8,808.7 385.0,828.7 381.0,836.0" fill="none" stroke="#ff6a6a" stroke-width="8" opacity="0.6" filter="url(#b2)" stroke-linecap="round"/>
<path d="M290.0,842.0C303.7,833.3 358.3,840.0 372.0,852.0C385.7,864.0 385.7,905.3 372.0,914.0C358.3,922.7 303.7,916.0 290.0,904.0C276.3,892.0 276.3,850.7 290.0,842.0Z" fill="#000" opacity="0.3" filter="url(#b8)"/>
<path d="M290.0,870.0C301.7,866.0 348.0,872.7 360.0,880.0C372.0,887.3 373.7,910.0 362.0,914.0C350.3,918.0 302.0,911.3 290.0,904.0C278.0,896.7 278.3,874.0 290.0,870.0Z" fill="#000" opacity="0.14" filter="url(#b4)"/>
<path d="M420.0,574.0C414.2,577.7 396.3,585.0 385.0,596.0C373.7,607.0 361.8,623.5 352.0,640.0C342.2,656.5 333.8,675.0 326.0,695.0C318.2,715.0 310.0,737.5 305.0,760.0C300.0,782.5 297.5,818.3 296.0,830.0" fill="none" stroke="#7a0000" stroke-width="6" opacity="0.3" filter="url(#b4)" stroke-linecap="round"/>
<path d="M463.3,620.0C462.6,622.0 460.1,628.2 459.0,632.0C457.9,635.8 457.1,641.2 456.7,643.0" fill="none" stroke="#ff8080" stroke-width="3.5" opacity="0.8" filter="url(#b2)" stroke-linecap="round"/>
<path d="M443.3,655.0C442.4,657.5 439.4,665.0 438.0,670.0C436.6,675.0 435.5,682.5 435.0,685.0" fill="none" stroke="#ff8080" stroke-width="3.5" opacity="0.8" filter="url(#b2)" stroke-linecap="round"/>
<path d="M560.0,520.0C570.0,513.3 603.3,492.5 620.0,480.0C636.7,467.5 648.3,455.0 660.0,445.0C671.7,435.0 685.0,424.2 690.0,420.0" fill="none" stroke="#ff6a6a" stroke-width="5" opacity="0.3" filter="url(#b4)" stroke-linecap="round"/>
</g>
<path d="M1328.0,605.0L1311.0,622.0L1222.0,713.0L1169.0,776.0L1166.0,776.0L1166.0,762.0L1215.0,703.0L1298.0,616.0L1316.0,598.0Z" fill="#f80404" filter="url(#b2)" clip-path="url(#bodyclip)" opacity="0.9"/>
<path d="M1222.2,580.0L1220.0,622.0L1218.9,655.6L1203.3,653.3L1197.8,648.9L1196.7,626.7L1207.8,604.4Z" fill="#1a9292" />
<path d="M1218.9,655.6L1220.0,622.0L1222.2,580.0L1224.0,600.0L1222.0,664.0L1214.0,668.0Z" fill="#a80000" />
<path d="M1196.0,656.0C1197.3,656.7 1200.3,659.0 1204.0,660.0C1207.7,661.0 1215.7,661.7 1218.0,662.0" fill="none" stroke="#ff4a4a" stroke-width="5" opacity="0.8" filter="url(#b2)" stroke-linecap="round"/>
<ellipse cx="1240" cy="578" rx="2.4" ry="13.5" fill="#000" transform="rotate(9 1240 578)"/>
<ellipse cx="1171" cy="685" rx="2.6" ry="9" fill="#000" transform="rotate(-6 1171 685)"/>
<path d="M1165.5,697 V775" stroke="#7a0000" stroke-width="1" opacity="0.6"/>
<path d="M1111.5,342.0L1143.3,337.6L1124.5,351.5L1105.0,365.8L1107.5,354.0Z" fill="#000" />
<path d="M1016.7,913.3C1016.7,913.3 1012.0,921.9 1008.9,926.7C1005.8,931.5 1001.9,937.4 997.8,942.2C993.7,947.0 989.6,951.0 984.4,955.5C979.2,960.0 972.4,964.8 966.7,968.9C961.0,973.0 955.6,976.9 950.0,980.0C944.4,983.1 938.0,985.6 933.0,987.8C928.0,990.0 920.0,993.0 920.0,993.0C920.0,993.0 976.0,993.0 976.0,993.0C976.0,993.0 983.2,981.0 986.7,975.5C990.2,970.0 993.4,965.5 996.7,960.0C1000.0,954.5 1003.6,948.1 1006.7,942.2C1009.8,936.3 1013.5,929.4 1015.5,924.4C1017.5,919.4 1018.9,912.2 1018.9,912.2C1018.9,912.2 1016.7,913.3 1016.7,913.3Z" fill="#000" />
<path d="M725.7,323.0C725.7,323.0 717.0,334.4 713.5,340.2C710.0,345.9 708.1,350.9 705.0,357.5C701.9,364.1 698.3,372.9 695.0,380.0C691.7,387.1 687.8,394.6 685.1,400.0C682.4,405.4 681.1,408.1 678.8,412.6C676.4,417.1 671.0,426.8 671.0,426.8C671.0,426.8 667.0,431.0 667.0,431.0C667.0,431.0 676.2,428.5 680.0,425.0C683.8,421.5 686.7,415.8 690.0,410.0C693.3,404.2 696.7,396.7 700.0,390.0C703.3,383.3 706.7,377.5 710.0,370.0C713.3,362.5 716.9,351.8 720.0,345.0C723.1,338.2 727.5,332.7 728.5,329.0C729.5,325.3 725.7,323.0 725.7,323.0Z" fill="#000" />
<path d="M560.8,587.6C560.8,587.6 549.1,590.5 543.2,592.9C537.3,595.2 530.9,597.9 525.6,601.7C520.3,605.5 515.9,610.7 511.5,615.7C507.1,620.7 503.0,626.0 499.2,631.6C495.4,637.2 492.1,643.1 488.6,649.2C485.1,655.4 481.5,661.8 478.0,668.5C474.5,675.2 471.3,682.7 467.5,689.7C463.7,696.8 459.2,704.1 455.2,710.8C451.2,717.5 447.8,722.6 443.3,730.0C438.8,737.4 433.0,746.7 428.3,755.0C423.6,763.3 419.4,771.7 415.0,780.0C410.6,788.3 405.9,797.5 401.7,805.0C397.5,812.5 393.1,819.5 390.0,825.0C386.9,830.5 384.8,835.4 383.3,838.3C381.8,841.2 381.0,842.5 381.0,842.5C381.0,842.5 383.0,839.6 386.7,835.0C390.4,830.4 397.8,822.0 403.3,815.0C408.9,808.0 414.4,800.5 420.0,793.3C425.6,786.1 431.7,778.1 436.7,771.7C441.7,765.3 444.4,762.0 450.0,755.0C455.6,748.0 463.9,738.3 470.0,730.0C476.1,721.7 480.9,713.8 486.7,705.0C492.4,696.2 504.5,677.3 504.5,677.3C504.5,677.3 523.8,678.2 523.8,678.2C523.8,678.2 525.9,673.9 529.1,668.5C532.3,663.1 539.4,652.5 543.2,645.7C547.0,639.0 550.0,633.9 552.0,628.0C554.0,622.1 554.0,614.3 555.5,610.5C557.0,606.7 560.8,605.2 560.8,605.2C560.8,605.2 560.8,587.6 560.8,587.6Z" fill="#000" />
<path d="M914.0,668.6L890.0,682.0L866.0,694.8L824.4,718.5L839.3,721.5L874.8,702.2L907.4,678.5L914.5,672.0Z" fill="#000" />
<path d="M392.0,861.0L851.0,928.0L832.0,930.0L832.0,955.0L822.0,962.0L812.0,974.0L720.0,960.0L402.0,913.0L411.0,905.0L403.8,901.0L396.0,892.5L393.0,881.0Z" fill="#000" />
<path d="M602.0,893.0L640.0,898.0L640.0,925.0L632.0,938.0L612.0,940.0L603.0,932.0Z" fill="#f20000" />
<path d="M832.0,930.0L851.0,928.0L850.0,972.0L812.0,974.0L822.0,962.0L832.0,955.0Z" fill="#f00000" />
<path d="M368.0,857.8L379.0,849.4L852.0,917.0L851.0,928.0Z" fill="#fff" />
<g id="cockpit">
<path d="M765.0,345.0L1010.0,367.0L1030.0,382.0L1045.0,432.0L1040.0,520.0L960.0,585.0L700.0,560.0L690.0,520.0L745.0,430.0Z" fill="#f20000" />
<linearGradient id="gOr" x1="744" y1="430" x2="700" y2="515" gradientUnits="userSpaceOnUse"><stop offset="0" stop-color="#e8740a"/><stop offset="1" stop-color="#e89a14"/></linearGradient>
<path d="M744.5,424.0L744.5,481.0L689.0,517.0L676.0,520.0L738.0,420.0Z" fill="url(#gOr)" />
<path d="M744.5,481.0L744.5,489.0L731.0,497.5L703.0,514.5L682.0,530.0L676.0,522.0L689.0,517.0Z" fill="#c40000" />
<path d="M731.0,497.0L731.5,502.5L710.0,519.0L701.7,527.0L678.0,534.0L681.7,530.0L703.3,513.3Z" fill="#1f9a9a" />
<linearGradient id="gOr2" x1="1050" y1="450" x2="1015" y2="520" gradientUnits="userSpaceOnUse"><stop offset="0" stop-color="#e8860e"/><stop offset="1" stop-color="#d6a21c"/></linearGradient>
<path d="M1040.0,432.0L1048.0,446.0L1051.0,481.0L1052.0,513.0L1033.3,526.0L992.0,524.0L1010.0,480.0L1030.0,440.0Z" fill="url(#gOr2)" />
<path d="M1032.4,486.0L1032.4,526.0L1012.0,524.0L1012.0,484.0Z" fill="#d0a41e" />
<path d="M1018.0,488.0L1033.0,493.0L1033.0,503.0L1018.0,498.0Z" fill="#8ea634" />
<linearGradient id="gGr" x1="990" y1="520" x2="1030" y2="545" gradientUnits="userSpaceOnUse"><stop offset="0" stop-color="#3aa862"/><stop offset="1" stop-color="#86ac34"/></linearGradient>
<path d="M985.0,522.0L1033.3,520.0L1030.0,530.0L1014.8,545.0L985.0,560.0Z" fill="url(#gGr)" />
<path d="M959.3,513.0L994.0,516.5L994.0,530.0L970.0,575.0L959.5,572.0Z" fill="#1b9090" />
<path d="M807.5,347.5L836.0,351.0L841.0,380.0L812.0,382.0Z" fill="#000" />
<path d="M770.0,354.5C770.0,354.5 1007.5,476.5 1007.5,476.5C1007.5,476.5 1004.0,492.5 1004.0,492.5C1004.0,492.5 770.0,364.5 770.0,364.5C770.0,364.5 766.7,363.2 766.0,362.0C765.3,360.8 765.3,358.2 766.0,357.0C766.7,355.8 770.0,354.5 770.0,354.5Z" fill="#0a0a0a" />
<path d="M772,357.5 L1004,480" stroke="#3a3a3a" stroke-width="2" opacity="0.6" filter="url(#b2)"/>
<radialGradient id="gTorso" cx="0.68" cy="0.42" r="0.75"><stop offset="0" stop-color="#ff3a3a"/><stop offset="0.35" stop-color="#f20000"/><stop offset="1" stop-color="#a80000"/></radialGradient>
<radialGradient id="gArm" cx="0.35" cy="0.35" r="0.8"><stop offset="0" stop-color="#ff3030"/><stop offset="0.5" stop-color="#f00000"/><stop offset="1" stop-color="#b00000"/></radialGradient>
<path d="M930.0,472.0C932.3,458.0 940.2,466.7 944.0,468.0C947.8,469.3 951.3,471.3 953.0,480.0C954.7,488.7 954.0,507.0 954.0,520.0C954.0,533.0 955.3,550.3 953.0,558.0C950.7,565.7 943.8,567.0 940.0,566.0C936.2,565.0 931.7,567.7 930.0,552.0C928.3,536.3 927.7,486.0 930.0,472.0Z" fill="#c60000" />
<path d="M943,478 L944,540" stroke="#ff5050" stroke-width="3" opacity="0.6" filter="url(#b2)"/>
<ellipse cx="909.6" cy="518" rx="21.5" ry="35" fill="url(#gArm)"/>
<path d="M915.5,554 Q927,550 931,536" fill="none" stroke="#e6dcdc" stroke-width="2.2" stroke-linecap="round"/>
<path d="M764.4,499.3C764.6,494.6 765.6,492.5 767.0,490.0C768.4,487.5 768.8,486.2 772.6,484.4C776.4,482.6 780.4,479.1 790.0,479.0C799.6,478.9 818.0,483.8 830.0,484.0C842.0,484.2 853.7,479.0 862.0,480.0C870.3,481.0 875.9,485.8 880.0,490.0C884.1,494.2 886.0,500.5 886.7,505.2C887.4,509.9 885.0,514.4 884.0,518.0C883.0,521.6 882.5,522.3 880.7,527.0C878.9,531.7 883.1,543.0 873.0,546.0C862.9,549.0 835.5,547.3 820.0,545.0C804.5,542.7 789.0,536.5 780.0,532.0C771.0,527.5 768.6,523.5 766.0,518.0C763.4,512.5 764.2,504.0 764.4,499.3Z" fill="url(#gTorso)" />
<path d="M780.0,459.3L784.4,474.0L769.6,487.4L771.9,474.0Z" fill="#ffee00" />
<path d="M764.4,506.7L769.6,523.0L762.2,524.4Z" fill="#ffee00" />
<path d="M891.1,460.7C891.1,460.7 905.9,460.7 905.9,460.7C905.9,460.7 899.2,468.7 897.0,472.6C894.8,476.6 893.8,480.4 892.6,484.4C891.4,488.3 890.4,492.7 889.6,496.3C888.9,499.9 888.1,506.0 888.1,506.0C888.1,506.0 886.7,505.2 886.7,505.2C886.7,505.2 883.7,495.6 882.2,491.9C880.7,488.2 877.8,486.2 877.8,483.0C877.8,479.8 880.0,476.3 882.2,472.6C884.4,468.9 891.1,460.7 891.1,460.7Z" fill="#ffee00" />
<path d="M879.0,526.0L884.5,528.0L878.0,541.0L872.0,540.0Z" fill="#ffee00" />
<path d="M892.6,451.2L919.2,453.6L921.0,463.4L909.4,464.6L908.2,460.6L893.8,459.0Z" fill="#d40000" stroke="#1414c4" stroke-width="2.6" stroke-linejoin="round"/>
<ellipse cx="834" cy="432.6" rx="52.5" ry="57.7" fill="url(#gHelm)"/>
<clipPath id="hc"><ellipse cx="834" cy="432.6" rx="52.5" ry="57.7"/></clipPath>
<g clip-path="url(#hc)">
<path d="M775.0,455.0L895.0,458.0L895.0,495.0L775.0,495.0Z" fill="#b80000" />
<path d="M780.0,462.0L890.0,465.0L885.0,480.0L785.0,478.0Z" fill="#8e0000" opacity="0.55"/>
<path d="M804.1,399.5C804.1,399.5 806.0,393.2 807.3,390.5C808.6,387.8 809.5,385.3 811.8,383.1C814.1,380.9 817.4,379.0 820.9,377.5C824.4,376.0 828.5,374.6 832.6,374.3C836.7,374.0 841.6,374.6 845.5,375.6C849.4,376.6 853.0,378.6 855.9,380.2C858.8,381.8 863.0,385.3 863.0,385.3C863.0,385.3 860.5,388.8 858.5,391.1C856.5,393.4 852.9,396.3 850.7,398.9C848.5,401.5 846.8,404.7 845.5,406.7C844.2,408.7 843.0,410.8 843.0,410.8C843.0,410.8 840.8,406.5 839.1,404.7C837.4,402.9 835.4,401.3 832.6,400.2C829.8,399.1 825.7,398.1 822.2,397.8C818.7,397.5 814.8,398.3 811.8,398.6C808.8,398.9 804.1,399.5 804.1,399.5Z" fill="#f4f4f4" />
<path d="M806.0,400.0C809.7,398.5 817.0,398.5 822.0,399.0C827.0,399.5 832.5,400.9 836.0,403.0C839.5,405.1 845.7,410.5 843.0,411.5C840.3,412.5 827.2,409.6 820.0,409.0C812.8,408.4 802.3,409.5 800.0,408.0C797.7,406.5 802.3,401.5 806.0,400.0Z" fill="#c80808" opacity="0.6"/>
<path d="M778.0,412.0C778.0,412.0 789.7,408.0 800.0,408.0C810.3,408.0 827.5,409.3 840.0,412.0C852.5,414.7 866.3,420.0 875.0,424.0C883.7,428.0 892.0,436.0 892.0,436.0C892.0,436.0 892.0,446.0 892.0,446.0C892.0,446.0 878.7,435.3 870.0,432.0C861.3,428.7 851.7,427.8 840.0,426.0C828.3,424.2 810.3,421.3 800.0,421.0C789.7,420.7 778.0,424.0 778.0,424.0C778.0,424.0 778.0,412.0 778.0,412.0Z" fill="#b20a0a" />
<path d="M784.0,423.5C784.0,423.5 792.2,420.8 799.0,421.0C805.8,421.2 816.3,423.7 825.0,424.8C833.7,425.9 843.5,426.4 851.0,427.4C858.5,428.4 865.9,429.3 870.0,430.6C874.1,431.9 874.7,432.9 875.4,435.0C876.1,437.1 875.1,440.4 874.0,443.0C872.9,445.6 871.2,448.4 869.0,450.7C866.8,453.0 861.0,457.0 861.0,457.0C861.0,457.0 846.2,459.6 838.0,459.8C829.8,460.0 820.7,459.1 812.0,458.0C803.3,456.9 786.0,453.0 786.0,453.0C786.0,453.0 783.5,447.7 783.0,444.0C782.5,440.3 782.8,434.4 783.0,431.0C783.2,427.6 784.0,423.5 784.0,423.5Z" fill="#262626" />
<path d="M812.0,450.0C814.7,447.5 823.7,444.0 830.0,443.0C836.3,442.0 844.7,442.5 850.0,444.0C855.3,445.5 860.7,449.7 862.0,452.0C863.3,454.3 862.3,456.7 858.0,458.0C853.7,459.3 843.3,459.8 836.0,459.8C828.7,459.8 818.0,459.6 814.0,458.0C810.0,456.4 809.3,452.5 812.0,450.0Z" fill="#9c0c0c" />
<path d="M876.7,435.0C876.7,435.0 884.8,434.5 886.0,436.5C887.2,438.5 884.9,444.2 884.0,447.0C883.1,449.8 882.6,451.2 880.5,453.3C878.4,455.4 874.8,458.9 871.5,459.8C868.2,460.7 861.0,458.5 861.0,458.5C861.0,458.5 866.8,453.3 869.0,450.7C871.2,448.1 872.7,445.6 874.0,443.0C875.3,440.4 876.7,435.0 876.7,435.0Z" fill="#d2d2d2" />
<path d="M786,468.9 L806,471.1" stroke="#4a0000" stroke-width="1.6" opacity="0.8"/>
<path d="M786,474.0 L806,476.2" stroke="#4a0000" stroke-width="1.6" opacity="0.8"/>
<path d="M786,479.2 L806,481.4" stroke="#4a0000" stroke-width="1.6" opacity="0.8"/>
<path d="M817,476.4 L848,475.4" stroke="#4a0000" stroke-width="1.6" opacity="0.8"/>
<path d="M817,480.2 L848,479.2" stroke="#4a0000" stroke-width="1.6" opacity="0.8"/>
<path d="M817,484.1 L848,483.1" stroke="#4a0000" stroke-width="1.6" opacity="0.8"/>
<path d="M838.0,420.0L845.0,413.0L849.0,423.0Z" fill="#b4b428" opacity="0.85"/>
<path d="M789.0,417.0L796.0,411.0L797.0,418.0Z" fill="#9a9a28" opacity="0.7"/>
<path d="M786,455.5 C810,460 850,462 872,458" fill="none" stroke="#e8c8c8" stroke-width="0.9" stroke-dasharray="6 3" opacity="0.8"/>
</g>
<ellipse cx="883.6" cy="424" rx="2.4" ry="3.6" fill="none" stroke="#c8c81a" stroke-width="1.2"/>
<path d="M872.8,362.6L950.5,363.9L951.2,404.0L929.8,409.9L880.5,404.0L872.0,389.8Z" fill="#d9d9d9" />
<path d="M928.5,365.2L950.5,363.9L951.2,404.0L931.0,408.5Z" fill="#c6c6c6" />
<path d="M872.8,362.6L928.5,365.2L931.0,408.5L880.5,404.0L872.0,389.8Z" fill="#ededed" stroke="#e4e4e4" stroke-width="1"/>
<path d="M879.3,367.0L924.6,369.0L922.0,399.0L884.4,399.0Z" fill="#fbfbfb" />
<path d="M879.3,367.0L924.6,369.0L923.0,385.0L905.0,380.0L896.0,384.0L879.5,398.0Z" fill="#bdbdbd" />
<path d="M903.0,370.0L924.0,371.0L923.0,383.0L906.0,379.0Z" fill="#8f8f8f" />
<clipPath id="hoopclip"><path d="M745.0,468.0C745.0,468.0 744.2,385.5 745.0,365.0C745.8,344.5 747.5,350.3 750.0,345.0C752.5,339.7 752.8,336.7 760.0,333.0C767.2,329.3 770.8,324.1 793.0,323.0C815.2,321.9 865.2,324.4 893.0,326.7C920.8,329.0 937.7,332.8 960.0,336.7C982.3,340.6 1011.5,346.1 1027.0,350.0C1042.5,353.9 1045.8,355.7 1053.0,360.0C1060.2,364.3 1066.3,370.0 1070.0,376.0C1073.7,382.0 1073.3,387.0 1075.0,396.0C1076.7,405.0 1078.0,418.8 1080.0,430.0C1082.0,441.2 1087.3,451.7 1087.0,463.0C1086.7,474.3 1084.0,489.5 1078.0,498.0C1072.0,506.5 1051.0,514.0 1051.0,514.0C1051.0,514.0 1050.0,445.0 1050.0,445.0C1050.0,445.0 1038.3,403.2 1035.0,392.0C1031.7,380.8 1034.2,382.0 1030.0,378.0C1025.8,374.0 1010.0,368.0 1010.0,368.0C1010.0,368.0 938.3,361.1 900.0,357.0C861.7,352.9 780.0,343.5 780.0,343.5C780.0,343.5 772.5,343.6 770.0,345.0C767.5,346.4 765.8,331.5 765.0,352.0C764.2,372.5 765.0,468.0 765.0,468.0C765.0,468.0 745.0,468.0 745.0,468.0Z"/></clipPath>
<path d="M745.0,468.0C745.0,468.0 744.2,385.5 745.0,365.0C745.8,344.5 747.5,350.3 750.0,345.0C752.5,339.7 752.8,336.7 760.0,333.0C767.2,329.3 770.8,324.1 793.0,323.0C815.2,321.9 865.2,324.4 893.0,326.7C920.8,329.0 937.7,332.8 960.0,336.7C982.3,340.6 1011.5,346.1 1027.0,350.0C1042.5,353.9 1045.8,355.7 1053.0,360.0C1060.2,364.3 1066.3,370.0 1070.0,376.0C1073.7,382.0 1073.3,387.0 1075.0,396.0C1076.7,405.0 1078.0,418.8 1080.0,430.0C1082.0,441.2 1087.3,451.7 1087.0,463.0C1086.7,474.3 1084.0,489.5 1078.0,498.0C1072.0,506.5 1051.0,514.0 1051.0,514.0C1051.0,514.0 1050.0,445.0 1050.0,445.0C1050.0,445.0 1038.3,403.2 1035.0,392.0C1031.7,380.8 1034.2,382.0 1030.0,378.0C1025.8,374.0 1010.0,368.0 1010.0,368.0C1010.0,368.0 938.3,361.1 900.0,357.0C861.7,352.9 780.0,343.5 780.0,343.5C780.0,343.5 772.5,343.6 770.0,345.0C767.5,346.4 765.8,331.5 765.0,352.0C764.2,372.5 765.0,468.0 765.0,468.0C765.0,468.0 745.0,468.0 745.0,468.0Z" fill="#f60000" />
<g clip-path="url(#hoopclip)">
<path d="M755.0,465.0C755.0,447.5 753.8,379.8 755.0,360.0C756.2,340.2 758.7,349.7 762.0,346.0C765.3,342.3 753.2,338.8 775.0,338.0C796.8,337.2 862.2,338.8 893.0,341.0C923.8,343.2 938.8,347.5 960.0,351.0C981.2,354.5 1006.3,358.2 1020.0,362.0C1033.7,365.8 1036.7,369.0 1042.0,374.0C1047.3,379.0 1049.0,381.0 1052.0,392.0C1055.0,403.0 1057.7,422.0 1060.0,440.0C1062.3,458.0 1065.0,490.0 1066.0,500.0" fill="none" stroke="#ff4040" stroke-width="7" opacity="0.7" filter="url(#b2)" stroke-linecap="round"/>
<path d="M766.0,468.0C766.0,448.7 765.2,372.3 766.0,352.0C766.8,331.7 768.5,347.2 771.0,346.0C773.5,344.8 759.5,342.9 781.0,345.0C802.5,347.1 861.8,354.4 900.0,358.5C938.2,362.6 988.5,366.1 1010.0,369.5C1031.5,372.9 1025.0,375.1 1029.0,379.0C1033.0,382.9 1030.7,381.8 1034.0,393.0C1037.3,404.2 1046.5,437.2 1049.0,446.0" fill="none" stroke="#8a0000" stroke-width="4" opacity="0.75" filter="url(#b2)" stroke-linecap="round"/>
<path d="M1090.0,463.0C1088.7,457.5 1084.2,441.2 1082.0,430.0C1079.8,418.8 1078.7,404.7 1077.0,396.0C1075.3,387.3 1072.8,381.0 1072.0,378.0" fill="none" stroke="#8a0000" stroke-width="4" opacity="0.5" filter="url(#b2)" stroke-linecap="round"/>
<path d="M1050.0,470.0C1050.2,477.3 1046.3,509.0 1051.0,514.0C1055.7,519.0 1073.5,502.3 1078.0,500.0" fill="none" stroke="#8a0000" stroke-width="5" opacity="0.5" filter="url(#b2)" stroke-linecap="round"/>
</g>
<line x1="750.8" y1="402" x2="662" y2="544.5" stroke="#050505" stroke-width="14.6" stroke-linecap="round"/>
<line x1="1040.7" y1="436.7" x2="958" y2="583" stroke="#050505" stroke-width="15" stroke-linecap="round"/>
<path d="M749,405 L660,548 M1039,440 L962,576" stroke="#444" stroke-width="2.5" opacity="0.55" filter="url(#b2)"/>
</g>
<path d="M655.0,548.0C655.0,548.0 655.2,547.2 661.0,545.0C666.8,542.8 679.8,538.3 690.0,535.0C700.2,531.7 710.8,526.9 722.5,525.0C734.2,523.1 747.1,523.3 760.0,523.5C772.9,523.7 786.7,524.5 800.0,526.0C813.3,527.5 827.5,530.2 840.0,532.5C852.5,534.8 865.0,537.5 875.0,540.0C885.0,542.5 893.3,545.0 900.0,547.5C906.7,550.0 908.3,552.9 915.0,555.0C921.7,557.1 932.5,558.2 940.0,560.0C947.5,561.8 956.3,562.0 960.0,566.0C963.7,570.0 962.0,584.0 962.0,584.0C962.0,584.0 962.0,600.0 962.0,600.0C962.0,600.0 947.8,597.7 940.0,596.0C932.2,594.3 921.7,592.3 915.0,590.0C908.3,587.7 906.7,584.5 900.0,582.0C893.3,579.5 885.0,577.5 875.0,575.0C865.0,572.5 852.5,569.3 840.0,567.0C827.5,564.7 813.3,562.5 800.0,561.0C786.7,559.5 772.9,558.2 760.0,558.0C747.1,557.8 734.2,558.3 722.5,560.0C710.8,561.7 699.6,565.0 690.0,568.0C680.4,571.0 670.8,575.7 665.0,578.0C659.2,580.3 655.0,582.0 655.0,582.0C655.0,582.0 655.0,548.0 655.0,548.0Z" fill="#ff0000" />
<path d="M962.0,600.0C958.3,599.3 947.8,597.7 940.0,596.0C932.2,594.3 921.7,592.3 915.0,590.0C908.3,587.7 906.7,584.5 900.0,582.0C893.3,579.5 885.0,577.5 875.0,575.0C865.0,572.5 852.5,569.3 840.0,567.0C827.5,564.7 813.3,562.5 800.0,561.0C786.7,559.5 772.9,558.2 760.0,558.0C747.1,557.8 734.2,558.3 722.5,560.0C710.8,561.7 699.6,565.0 690.0,568.0C680.4,571.0 670.8,575.7 665.0,578.0C659.2,580.3 656.7,581.3 655.0,582.0" fill="none" stroke="#ff0000" stroke-width="6" filter="url(#b2)"/>
<path d="M660.0,600.0C666.7,610.0 680.0,646.7 700.0,660.0C720.0,673.3 753.3,678.3 780.0,680.0C806.7,681.7 833.3,676.7 860.0,670.0C886.7,663.3 916.7,650.0 940.0,640.0C963.3,630.0 990.0,615.0 1000.0,610.0" fill="none" stroke="#ff6a6a" stroke-width="10" opacity="0.3" filter="url(#b8)" stroke-linecap="round"/>
<path d="M664.0,552.0C668.3,550.2 680.2,544.5 690.0,541.0C699.8,537.5 710.8,532.9 722.5,531.0C734.2,529.1 747.1,529.3 760.0,529.5C772.9,529.7 786.7,530.5 800.0,532.0C813.3,533.5 827.5,536.2 840.0,538.5C852.5,540.8 865.0,543.5 875.0,546.0C885.0,548.5 893.3,551.0 900.0,553.5C906.7,556.0 908.3,558.9 915.0,561.0C921.7,563.1 932.8,564.3 940.0,566.0C947.2,567.7 955.0,570.2 958.0,571.0" fill="none" stroke="#ff5050" stroke-width="5" opacity="0.5" filter="url(#b2)" stroke-linecap="round"/>
<path d="M645.0,562.5C645.4,567.1 644.2,582.1 647.5,590.0C650.8,597.9 657.9,604.2 665.0,610.0C672.1,615.8 680.0,620.2 690.0,625.0C700.0,629.8 716.7,635.7 725.0,638.5C733.3,641.3 730.8,641.6 740.0,642.0C749.2,642.4 765.4,642.6 780.0,641.0C794.6,639.4 812.5,635.6 827.5,632.5C842.5,629.4 857.1,625.8 870.0,622.5C882.9,619.2 893.8,616.1 905.0,612.5C916.2,608.9 927.5,604.3 937.5,601.0C947.5,597.7 954.6,595.0 965.0,592.5C975.4,590.0 994.2,587.1 1000.0,586.0" fill="none" stroke="#2a1a90" stroke-width="1" stroke-dasharray="5 2"/>
<rect x="644.7" y="561.2" width="2.6" height="2.6" fill="#f0e060"/>
<rect x="644.7" y="574.7" width="2.6" height="2.6" fill="#f0e060"/>
<rect x="650.5" y="590.7" width="2.6" height="2.6" fill="#f0e060"/>
<rect x="662.7" y="606.7" width="2.6" height="2.6" fill="#f0e060"/>
<rect x="687.7" y="622.5" width="2.6" height="2.6" fill="#f0e060"/>
<rect x="724.2" y="634.7" width="2.6" height="2.6" fill="#f0e060"/>
<rect x="732.5" y="636.2" width="2.6" height="2.6" fill="#f0e060"/>
<rect x="779.7" y="634.7" width="2.6" height="2.6" fill="#f0e060"/>
<rect x="826.2" y="628.7" width="2.6" height="2.6" fill="#f0e060"/>
<rect x="867.5" y="619.2" width="2.6" height="2.6" fill="#f0e060"/>
<rect x="903.7" y="609.2" width="2.6" height="2.6" fill="#f0e060"/>
<rect x="936.2" y="598.7" width="2.6" height="2.6" fill="#f0e060"/>
<rect x="963.7" y="588.7" width="2.6" height="2.6" fill="#f0e060"/>
<rect x="989.7" y="579.7" width="2.6" height="2.6" fill="#f0e060"/>
<path d="M595.3,500.6C595.1,497.9 596.6,494.8 598.3,493.4C600.0,491.9 601.8,491.3 605.5,491.9C609.2,492.5 616.5,495.7 620.7,497.0C624.9,498.3 628.8,498.5 630.9,499.5C633.0,500.5 633.0,499.8 633.4,503.0C633.8,506.2 632.8,514.9 633.0,518.9C633.2,522.9 633.9,525.1 634.5,527.0C635.1,528.9 636.5,530.5 636.5,530.5C636.5,530.5 631.0,530.5 631.0,530.5C631.0,530.5 627.3,524.9 624.8,523.0C622.2,521.1 618.9,520.3 615.7,518.9C612.5,517.5 608.2,516.3 605.5,514.8C602.8,513.3 601.1,512.1 599.4,509.7C597.7,507.3 595.5,503.3 595.3,500.6Z" fill="#8a0c0c" />
<path d="M598.0,496.0C598.8,494.9 602.3,493.2 606.0,493.5C609.7,493.8 616.0,496.8 620.0,498.0C624.0,499.2 628.2,499.3 630.0,500.5C631.8,501.7 633.5,504.8 631.0,505.0C628.5,505.2 620.0,502.8 615.0,502.0C610.0,501.2 603.8,501.0 601.0,500.0C598.2,499.0 597.2,497.1 598.0,496.0Z" fill="#a82222" opacity="0.8"/>
<path d="M600.0,508.0C601.0,507.9 607.7,512.0 612.0,514.0C616.3,516.0 622.8,517.7 626.0,520.0C629.2,522.3 631.7,527.8 631.0,528.0C630.3,528.2 626.2,523.2 622.0,521.0C617.8,518.8 609.7,516.7 606.0,514.5C602.3,512.3 599.0,508.1 600.0,508.0Z" fill="#5a0404" opacity="0.7"/>
<path d="M634.6,530C640,540 643.6,550 645.6,560" fill="none" stroke="#2a2ab8" stroke-width="2.6"/>
<path d="M984.3,548.0C984.3,548.0 992.5,546.9 1000.0,546.5C1007.5,546.1 1023.9,545.4 1029.6,545.9C1035.3,546.4 1033.7,547.4 1034.3,549.6C1034.9,551.8 1034.4,556.1 1033.0,558.9C1031.6,561.7 1031.1,564.7 1025.9,566.3C1020.7,567.9 1007.9,567.9 1001.9,568.5C995.9,569.1 993.1,568.1 990.0,570.0C986.9,571.9 985.7,576.5 983.0,580.0C980.3,583.5 974.0,591.0 974.0,591.0C974.0,591.0 972.0,588.0 972.0,588.0C972.0,588.0 978.8,576.7 981.0,572.0C983.2,567.3 984.5,564.0 985.0,560.0C985.5,556.0 984.3,548.0 984.3,548.0Z" fill="#9a0c0c" />
<path d="M985.5,548.5C985.5,548.5 1021.6,546.2 1029.6,546.5C1037.6,546.8 1035.2,548.8 1033.6,550.0C1032.0,551.2 1027.6,552.7 1020.0,553.5C1012.4,554.3 993.8,555.8 988.0,555.0C982.2,554.2 985.5,548.5 985.5,548.5Z" fill="#b82626" />
<path d="M988.0,562.0C991.0,560.8 1012.8,562.0 1020.0,561.0C1027.2,560.0 1030.0,555.1 1031.0,556.0C1032.0,556.9 1030.8,564.2 1025.9,566.3C1021.1,568.4 1008.2,569.2 1001.9,568.5C995.6,567.8 985.0,563.2 988.0,562.0Z" fill="#6e0606" />
<path d="M977.5,575C968,584 960,590 953.75,598.75" fill="none" stroke="#2222b0" stroke-width="2"/>
<path d="M1056.5,483.0L1071.0,471.5L1073.5,490.0L1061.0,501.0Z" fill="#3a0606" />
<ellipse cx="1067.6" cy="484.8" rx="4.6" ry="8.3" fill="#22dcec" transform="rotate(8 1067.6 484.8)"/>
<ellipse cx="1060.7" cy="492.2" rx="2.6" ry="8" fill="#1cc4d6" transform="rotate(8 1060.7 492.2)"/>
<rect x="530.0" y="580.0" width="2.6" height="2.6" fill="#efe6a8"/>
<rect x="500.7" y="598.2" width="2.6" height="2.6" fill="#efe6a8"/>
<rect x="358.2" y="638.7" width="2.6" height="2.6" fill="#efe6a8"/>
<rect x="460.4" y="653.0" width="2.6" height="2.6" fill="#efe6a8"/>
<rect x="350.7" y="686.7" width="2.6" height="2.6" fill="#efe6a8"/>
<rect x="419.2" y="695.7" width="2.6" height="2.6" fill="#efe6a8"/>
<rect x="323.2" y="752.5" width="2.6" height="2.6" fill="#efe6a8"/>
<rect x="369.2" y="758.7" width="2.6" height="2.6" fill="#efe6a8"/>
<rect x="374.9" y="807.0" width="2.6" height="2.6" fill="#efe6a8"/>
<rect x="366.7" y="832.5" width="2.6" height="2.6" fill="#efe6a8"/>
<rect x="929.2" y="655.0" width="2.6" height="2.6" fill="#efe6a8"/>
<rect x="898.7" y="711.7" width="2.6" height="2.6" fill="#efe6a8"/>
<rect x="1007.0" y="726.2" width="2.6" height="2.6" fill="#efe6a8"/>
<rect x="903.7" y="763.0" width="2.6" height="2.6" fill="#efe6a8"/>
<rect x="976.2" y="773.2" width="2.6" height="2.6" fill="#efe6a8"/>
<rect x="908.7" y="835.0" width="2.6" height="2.6" fill="#efe6a8"/>
<rect x="958.0" y="842.0" width="2.6" height="2.6" fill="#efe6a8"/>
<rect x="870.7" y="878.7" width="2.6" height="2.6" fill="#efe6a8"/>
<rect x="860.0" y="905.0" width="2.6" height="2.6" fill="#efe6a8"/>
<rect x="982.5" y="873.7" width="2.6" height="2.6" fill="#efe6a8"/>
<rect x="982.5" y="908.7" width="2.6" height="2.6" fill="#efe6a8"/>
<rect x="963.2" y="945.7" width="2.6" height="2.6" fill="#efe6a8"/>
<rect x="942.0" y="978.7" width="2.6" height="2.6" fill="#efe6a8"/>
<rect x="1071.2" y="651.2" width="2.6" height="2.6" fill="#efe6a8"/>
<rect x="1039.2" y="669.5" width="2.6" height="2.6" fill="#efe6a8"/>
<rect x="1161.6" y="707.6" width="2.6" height="2.6" fill="#efe6a8"/>
<rect x="1160.9" y="740.9" width="2.6" height="2.6" fill="#efe6a8"/>
<rect x="1160.2" y="772.0" width="2.6" height="2.6" fill="#efe6a8"/>
<path d="M983.75,876 V909" stroke="#5a0000" stroke-width="0.8"/>
</g>
</svg>

<div id="doctext" class="abs">Voiture assomblee [Read-only]</div>
<div id="apptitle" class="abs">Voiture assomblee [Read-only]</div>
<div id="viewtext" class="abs">*Dimetric</div>

<div id="taskbar" class="abs"></div>
<div id="search" class="abs"></div>
<div id="searchtext" class="abs">Type here to search</div>
<div class="abs clk" style="top:1044px;letter-spacing:-0.15px;left:1799.7px">11:42 AM</div>
<div class="abs clk" style="top:1062px;letter-spacing:-0.3px;left:1800.2px">1/29/2021</div>

<svg width="1920" height="36" viewBox="0 0 1920 36" style="position:absolute;left:0;top:0">
<defs>
<linearGradient id="igDoc" x1="0" y1="0" x2="1" y2="1"><stop offset="0" stop-color="#fdfdfd"/><stop offset="1" stop-color="#d4d4d4"/></linearGradient>
<linearGradient id="igSave" x1="0" y1="0" x2="0" y2="1"><stop offset="0" stop-color="#6aaede"/><stop offset="1" stop-color="#1f6aa8"/></linearGradient>
<linearGradient id="igPrn" x1="0" y1="0" x2="0" y2="1"><stop offset="0" stop-color="#7fd0f0"/><stop offset="1" stop-color="#1f8fc4"/></linearGradient>
</defs>
<g fill="none" stroke="#d9232e" stroke-width="1.45" stroke-linecap="round" stroke-linejoin="round">
<path d="M16.2,5.6 L7.6,23.2"/>
<path d="M11.8,7 L20,6.4 L15.4,12.7 C19.6,12.3 22.2,14.8 21.5,17.7 C20.6,21.4 13.2,23.4 5.6,23.8"/>
<path d="M24.6,12.9 L21.6,13 C19.8,13.2 19.4,15.2 20.9,16.3 L23,17.9 C24.6,19.3 23.8,22.2 21.2,22.7 L16.6,23.2" stroke-width="1.6"/>
</g>
<text x="30" y="23.2" font-family="Liberation Sans, sans-serif" font-size="13.4" font-style="italic" fill="#d9232e"><tspan font-weight="bold" textLength="39.5" lengthAdjust="spacingAndGlyphs">SOLID</tspan><tspan dx="0.6" textLength="41" lengthAdjust="spacingAndGlyphs" fill="#dc3a44">WORKS</tspan></text>
<path d="M130.6,13 L136.2,17.5 L130.6,22 Z" fill="#8c8c8c"/>
<g stroke-linejoin="round"><path d="M173,18 L173,26.3 L185.2,26.3 L185.2,18" fill="#f4f6f7" stroke="#26343c" stroke-width="1.4"/><path d="M170.6,18.6 L179.1,10.2 L187.6,18.6" fill="none" stroke="#1f526c" stroke-width="2.6" stroke-linecap="round"/><path d="M173.4,18 L179.1,12.6 L184.8,18" fill="#f4f6f7" stroke="#5c9cc0" stroke-width="1"/><rect x="177.2" y="20" width="4.4" height="6.3" fill="#fff" stroke="#26343c" stroke-width="1.2"/></g>
<path d="M202.6,10.2 L211.4,10.2 L215.6,14.4 L215.6,26 L202.6,26 Z" fill="url(#igDoc)" stroke="#3a3a3a" stroke-width="1.2" stroke-linejoin="round"/><path d="M211.2,10.4 L211.2,14.6 L215.4,14.6" fill="#fff" stroke="#3a3a3a" stroke-width="1"/>
<path d="M227.8,16 L233.6,16 L230.7,19.2 Z" fill="#222"/>
<path d="M244,10.6 L249.5,10.6 L251,12.6 L258.8,12.6 L258.8,16 L262.6,16 L258.4,26 L244,26 Z" fill="#d8dade" stroke="#3c3c3c" stroke-width="1.2" stroke-linejoin="round"/><path d="M248.6,16.4 L262.6,16.2 L258.2,26 L244.4,26 Z" fill="#f3f3f5" stroke="#3c3c3c" stroke-width="1.1" stroke-linejoin="round"/><path d="M250.2,9.6 C254,9 256.6,10.8 256.8,14 L259.2,14 L255.4,18.6 L251.6,14 L254,14 C253.8,12 252.4,10.8 250.2,9.6 Z" fill="#2fa32a" stroke="#1c6e1a" stroke-width="0.7"/>
<path d="M271.6,16 L277.4,16 L274.5,19.2 Z" fill="#222"/>
<path d="M288.6,9.4 L306,9.4 L306,26.2 L291,26.2 L288.6,23.8 Z" fill="url(#igSave)" stroke="#163e63" stroke-width="1.2" stroke-linejoin="round"/><rect x="291.6" y="9.8" width="11.4" height="7.6" fill="#f4f6f8" stroke="#163e63" stroke-width="0.8"/><path d="M293,12 H301.6 M293,14 H301.6 M293,15.8 H301.6" stroke="#8a96a2" stroke-width="0.8"/><rect x="293.4" y="20" width="9.6" height="6.2" fill="#cfd6dc" stroke="#163e63" stroke-width="0.8"/><rect x="295" y="21" width="2.6" height="5" fill="#3a4a58"/><rect x="299" y="21" width="2" height="5" fill="#55687a"/>
<path d="M316.0,16 L321.8,16 L318.9,19.2 Z" fill="#222"/>
<path d="M335.4,16 L336.2,10 L346.2,10 L347,16 Z" fill="#f6f6f6" stroke="#3a3a3a" stroke-width="1"/><rect x="332.4" y="16" width="17.6" height="7.4" rx="1.6" fill="url(#igPrn)" stroke="#124e74" stroke-width="1.1"/><rect x="335" y="20.4" width="12.4" height="1.6" fill="#0d2e44"/><path d="M334.6,23.6 L347.8,23.6 L348.6,26.4 L333.8,26.4 Z" fill="#f2f2f2" stroke="#3a3a3a" stroke-width="1"/>
<path d="M359.8,16 L365.6,16 L362.7,19.2 Z" fill="#222"/>
<path d="M377,11.6 L377,17.6 L383,17.6 L381,15.4 C385,13.6 388.8,15.4 389.4,19 C389.8,21.4 388.6,23.2 386.4,24.4 C390.8,24 393.6,21 393,17 C392.2,12.4 386.4,10 380.6,13.8 Z" fill="#d2d2d2" stroke="#bdbdbd" stroke-width="0.8" stroke-linejoin="round"/>
<path d="M403.6,16 L409.4,16 L406.5,19.2 Z" fill="#9c9c9c"/>
<path d="M437,11.6 L437,17.6 L431,17.6 L433,15.4 C429,13.6 425.2,15.4 424.6,19 C424.2,21.4 425.4,23.2 427.6,24.4 C423.2,24 420.4,21 421,17 C421.8,12.4 427.6,10 433.4,13.8 Z" fill="#d2d2d2" stroke="#bdbdbd" stroke-width="0.8" stroke-linejoin="round"/>
<path d="M447.9,16 L453.7,16 L450.8,19.2 Z" fill="#9c9c9c"/>
<rect x="458.5" y="3.5" width="43" height="29" fill="#fbfbfb" stroke="#8e8e8e" stroke-width="1"/><rect x="459" y="4" width="29.5" height="28" fill="#b3b3b3"/>
<path d="M468.2,8.8 L468.2,23.4 L471.6,20.4 L474.2,25.8 L476.4,24.8 L473.8,19.6 L478.6,19.4 Z" fill="#fff" stroke="#1a1a1a" stroke-width="1.1" stroke-linejoin="round"/>
<path d="M492.0,16 L497.8,16 L494.9,19.2 Z" fill="#222"/>
<rect x="512" y="9" width="10" height="17.6" rx="5" fill="#1c2418"/><circle cx="517" cy="13.6" r="2.7" fill="#e62a20"/><circle cx="516.6" cy="12.8" r="0.9" fill="#ff9a8a"/><circle cx="517" cy="22" r="2.7" fill="#2f9a2a"/><circle cx="516.6" cy="21.4" r="0.9" fill="#a8f09a"/>
<rect x="539.6" y="9.6" width="15" height="16.6" fill="#f7f7f7" stroke="#164a6a" stroke-width="1.3"/>
<rect x="541.6" y="11.6" width="3.6" height="3.2" fill="#3b8ec0" stroke="#164a6a" stroke-width="0.8"/><path d="M547.2,13.2 H553" stroke="#4a4a4a" stroke-width="1"/>
<rect x="541.6" y="16.4" width="3.6" height="3.2" fill="#3b8ec0" stroke="#164a6a" stroke-width="0.8"/><path d="M547.2,18.0 H553" stroke="#4a4a4a" stroke-width="1"/>
<rect x="541.6" y="21.2" width="3.6" height="3.2" fill="#3b8ec0" stroke="#164a6a" stroke-width="0.8"/><path d="M547.2,22.8 H553" stroke="#4a4a4a" stroke-width="1"/>
<path d="M584.84,16.31L584.84,19.49L582.79,19.82L582.45,20.64L583.67,22.32L581.42,24.57L579.74,23.35L578.92,23.69L578.59,25.74L575.41,25.74L575.08,23.69L574.26,23.35L572.58,24.57L570.33,22.32L571.55,20.64L571.21,19.82L569.16,19.49L569.16,16.31L571.21,15.98L571.55,15.16L570.33,13.48L572.58,11.23L574.26,12.45L575.08,12.11L575.41,10.06L578.59,10.06L578.92,12.11L579.74,12.45L581.42,11.23L583.67,13.48L582.45,15.16L582.79,15.98Z" fill="#f8f8f8" stroke="#2a2a2a" stroke-width="1.1" stroke-linejoin="round"/><circle cx="577" cy="17.9" r="2.6" fill="#f8f8f8" stroke="#2a2a2a" stroke-width="1.1"/>
<path d="M595.7,16 L601.5,16 L598.6,19.2 Z" fill="#222"/>
<circle cx="1755" cy="18" r="8.6" fill="none" stroke="#3a3a3a" stroke-width="1.1"/><circle cx="1755" cy="15.6" r="3.2" fill="none" stroke="#3a3a3a" stroke-width="1.1"/><path d="M1748.8,23.6 C1750,19.6 1760,19.6 1761.2,23.6" fill="none" stroke="#3a3a3a" stroke-width="1.1"/>
<circle cx="1791" cy="18" r="8.6" fill="none" stroke="#3a3a3a" stroke-width="1.1"/><path d="M1788.2,15.2 C1788.2,11.8 1794,11.8 1794,15 C1794,17.2 1791,17.2 1791,19.8" fill="none" stroke="#2a2a2a" stroke-width="1.4"/><circle cx="1791" cy="22.8" r="0.95" fill="#2a2a2a"/>
<rect x="1822" y="22" width="10" height="1.8" fill="#2a2a2a"/>
<path d="M1859.5,14.5 V11.5 H1870.5 V19.5 H1867.5" fill="none" stroke="#2a2a2a" stroke-width="1.2"/><rect x="1856.5" y="14.8" width="11" height="8.7" fill="#f6f6f6" stroke="#2a2a2a" stroke-width="1.2"/>
<path d="M1893.6,12.6 L1904.4,23.4 M1904.4,12.6 L1893.6,23.4" stroke="#2a2a2a" stroke-width="1.5"/>
</svg><svg width="1920" height="1040" viewBox="0 0 1920 1040" style="position:absolute;left:0;top:0;pointer-events:none">
<defs>
<linearGradient id="wb" x1="0" y1="0" x2="0" y2="1"><stop offset="0" stop-color="#c9dbf1"/><stop offset="0.48" stop-color="#bcd1ec"/><stop offset="0.52" stop-color="#a5c0e2"/><stop offset="1" stop-color="#b6cdea"/></linearGradient>
<linearGradient id="wbr" x1="0" y1="0" x2="0" y2="1"><stop offset="0" stop-color="#eaa99a"/><stop offset="0.48" stop-color="#dd7a66"/><stop offset="0.52" stop-color="#c8391c"/><stop offset="1" stop-color="#d86a4e"/></linearGradient>
</defs>
<g stroke-linejoin="round"><path d="M12,52.6 L16,48.4 L20.6,48 L20.6,54 L26.6,56.4 L26.6,60.4 L21,62.4 L12,57.6 Z" fill="#f6c828" stroke="#2a2408" stroke-width="1"/><path d="M20.6,54 L20.6,58 L21,62.4 M12,52.6 L20.6,58" fill="none" stroke="#2a2408" stroke-width="0.9"/><path d="M21,58 L26.6,56.4 L26.6,60.4 L21,62.4 Z" fill="#fde27a" stroke="#2a2408" stroke-width="0.9"/><path d="M18.4,49.6 L22.4,47.8 L26.6,49.6 L26.6,54.4 L22.6,56.4 L18.4,54.4 Z" fill="#8fd0f4" stroke="#123a52" stroke-width="1.1"/><path d="M18.4,49.6 L22.6,51.6 L26.6,49.6 M22.6,51.6 L22.6,56.4" fill="none" stroke="#123a52" stroke-width="0.9"/></g>
<rect x="1667.0" y="46.5" width="31" height="17" rx="2.5" fill="url(#wb)" stroke="#7f9dc4" stroke-width="1"/>
<rect x="1668.0" y="47.5" width="29" height="15" rx="2" fill="none" stroke="#fff" stroke-opacity="0.35" stroke-width="1"/>
<rect x="1701.2" y="46.5" width="31" height="17" rx="2.5" fill="url(#wb)" stroke="#7f9dc4" stroke-width="1"/>
<rect x="1702.2" y="47.5" width="29" height="15" rx="2" fill="none" stroke="#fff" stroke-opacity="0.35" stroke-width="1"/>
<rect x="1735.4" y="46.5" width="31" height="17" rx="2.5" fill="url(#wb)" stroke="#7f9dc4" stroke-width="1"/>
<rect x="1736.4" y="47.5" width="29" height="15" rx="2" fill="none" stroke="#fff" stroke-opacity="0.35" stroke-width="1"/>
<rect x="1769.5" y="46.5" width="31" height="17" rx="2.5" fill="url(#wb)" stroke="#7f9dc4" stroke-width="1"/>
<rect x="1770.5" y="47.5" width="29" height="15" rx="2" fill="none" stroke="#fff" stroke-opacity="0.35" stroke-width="1"/>
<rect x="1803.4" y="46.5" width="31" height="17" rx="2.5" fill="url(#wbr)" stroke="#7a2a1a" stroke-width="1"/>
<rect x="1804.4" y="47.5" width="29" height="15" rx="2" fill="none" stroke="#fff" stroke-opacity="0.35" stroke-width="1"/>
<rect x="1676.4" y="48.4" width="12" height="11.6" fill="#f4f6fa" stroke="#2a3644" stroke-width="1.2"/><rect x="1683.6" y="50.6" width="2.4" height="7.2" fill="#fff" stroke="#2a3644" stroke-width="1"/><path d="M1682.2,50.8 L1678.4,54.2 L1682.2,57.6 Z" fill="#2a3644"/>
<rect x="1710.6" y="48.4" width="12" height="11.6" fill="#f4f6fa" stroke="#2a3644" stroke-width="1.2"/><rect x="1713.2" y="50.6" width="2.4" height="7.2" fill="#fff" stroke="#2a3644" stroke-width="1"/><path d="M1717,50.8 L1720.8,54.2 L1717,57.6 Z" fill="#2a3644"/>
<rect x="1745" y="54.2" width="10.6" height="4" rx="0.8" fill="#f8fafc" stroke="#5a6a80" stroke-width="1"/>
<rect x="1779.4" y="50" width="10.4" height="8.2" rx="0.8" fill="#f8fafc" stroke="#3a4658" stroke-width="1.1"/><rect x="1782.4" y="53" width="4.6" height="2.4" fill="#c6d6ea" stroke="#3a4658" stroke-width="0.9"/>
<path d="M1814,50 L1823.2,58.4 M1823.2,50 L1814,58.4" stroke="#6a2010" stroke-width="4.4" stroke-linecap="square" opacity="0.5"/><path d="M1814,50 L1823.2,58.4 M1823.2,50 L1814,58.4" stroke="#fff" stroke-width="3" stroke-linecap="square"/>
<rect x="10" y="512" width="8" height="37" fill="#f6f6f6" stroke="#c8c8c8" stroke-width="0.8"/><circle cx="14" cy="530" r="1.8" fill="none" stroke="#9a9a9a" stroke-width="0.9"/>
<rect x="1838" y="110" width="3" height="52" fill="#e4effb" opacity="0.7"/>
<rect x="3" y="92" width="4" height="62" fill="#dfeaf8" opacity="0.8"/>
<g><path d="M46.1,936.7 L31.7,946.7" stroke="#1414c8" stroke-width="4.4"/><path d="M29.5,944 L38,940.6 L36.5,949 Z" fill="#1414c8"/><rect x="44" y="917" width="4.4" height="20" fill="#18c418"/><path d="M41.6,918.6 L46.2,908.2 L50.8,918.6 Z" fill="#12b412"/><path d="M46.1,936.9 L66,939.6" stroke="#d01414" stroke-width="4.2"/><path d="M64.2,934.8 L74.4,940 L63.6,944.6 Z" fill="#c81212"/></g>
<text x="43.5" y="902.6" font-family="Liberation Sans, sans-serif" font-size="7.5" fill="#3fcf3f">Y</text>
<text x="77" y="940.8" font-family="Liberation Sans, sans-serif" font-size="7.5" fill="#e06070">X</text>
<text x="32" y="946.6" font-family="Liberation Sans, sans-serif" font-size="5" fill="#b8c0ff">Z</text>
</svg><svg width="1920" height="40" viewBox="0 1040 1920 40" style="position:absolute;left:0;top:1040px">
<defs>
<linearGradient id="tgEdge1" x1="0" y1="0" x2="1" y2="1"><stop offset="0" stop-color="#35c1f1"/><stop offset="0.6" stop-color="#2aa0dc"/><stop offset="1" stop-color="#0c59a4"/></linearGradient>
<linearGradient id="tgEdge2" x1="0" y1="0" x2="1" y2="0"><stop offset="0" stop-color="#36c6d8"/><stop offset="1" stop-color="#6fdc4a"/></linearGradient>
<linearGradient id="tgMail" x1="0" y1="0" x2="0" y2="1"><stop offset="0" stop-color="#38b8f2"/><stop offset="1" stop-color="#1a8ad8"/></linearGradient>
<linearGradient id="tgFold" x1="0" y1="0" x2="0" y2="1"><stop offset="0" stop-color="#ffd766"/><stop offset="1" stop-color="#f4b930"/></linearGradient>
</defs>
<path d="M15.8,1054.2 L22.6,1053.2 L22.6,1059.4 L15.8,1059.4 Z M23.6,1053 L32.2,1051.8 L32.2,1059.4 L23.6,1059.4 Z M15.8,1060.4 L22.6,1060.4 L22.6,1066.6 L15.8,1065.6 Z M23.6,1060.4 L32.2,1060.4 L32.2,1067.9 L23.6,1066.8 Z" fill="#fff"/>
<circle cx="70.8" cy="1058" r="4.7" fill="none" stroke="#2b2b2b" stroke-width="1.4"/><path d="M67.4,1061.4 L60.8,1067.4" stroke="#2b2b2b" stroke-width="1.5"/>
<circle cx="416.2" cy="1059.8" r="6.7" fill="none" stroke="#fff" stroke-width="2"/>
<g fill="none" stroke="#fff" stroke-width="1.3"><rect x="458.4" y="1055.6" width="8.6" height="7.6"/><path d="M456.2,1054.4 V1052.4 H467.6 V1054.4 M456.2,1064.6 V1066.6 H467.6 V1064.6"/><path d="M470.8,1052 V1055 M470.8,1060.6 V1067"/></g><rect x="469.4" y="1056" width="2.8" height="3.4" fill="#fff"/>
<circle cx="515" cy="1059.8" r="12.3" fill="url(#tgEdge1)"/>
<path d="M503.4,1056 C505,1049.6 511,1047.4 516,1047.6 C523.6,1048 528,1053.6 527.2,1059.6 C526.6,1063.4 523.2,1065 519.6,1064.4 C516.6,1063.8 517.8,1060.6 516.6,1058.6 C514.6,1055.2 508,1053.4 503.4,1056 Z" fill="url(#tgEdge2)"/>
<path d="M506.4,1060.4 C506.8,1066.2 511.8,1070.8 518.4,1071.6 C513,1072.6 505.4,1069.6 503.2,1062.6 C502.6,1060.2 502.8,1058 503.4,1056 C506.4,1054 511.4,1054.8 513.6,1057.6 C510,1056.8 506.2,1058 506.4,1060.4 Z" fill="#0d4f9c"/>
<path d="M513.4,1062.6 C512.2,1059.8 514.4,1057.8 516.8,1058.8 C518,1061 516.6,1063.8 519.6,1064.4 C522,1064.8 524.2,1064 525.6,1062.6 C523.4,1067.4 517.4,1069 513.4,1062.6 Z" fill="#1b6fc0"/>
<path d="M553.4,1052.2 L553.4,1050.8 L561,1050.8 L562.6,1052.2 Z" fill="#e0a020"/><rect x="553.2" y="1052" width="21.6" height="16.4" fill="url(#tgFold)"/><path d="M557,1068.4 L557,1062.2 C557,1061.4 557.6,1061 558.2,1061 L570,1061 C570.6,1061 571.2,1061.4 571.2,1062.2 L571.2,1068.4 Z" fill="#3f8fd2"/><rect x="560.6" y="1064.6" width="7" height="3.8" fill="#f4b930"/><rect x="553.2" y="1068" width="21.6" height="0.9" fill="#c98a14"/>
<path d="M607.4,1053.6 V1050.4 C607.4,1049 608.2,1048.6 609,1048.6 H616 C616.8,1048.6 617.6,1049 617.6,1050.4 V1053.6" fill="none" stroke="#f2f2f2" stroke-width="1.6"/><path d="M601.4,1053.4 H623.6 V1071.6 H601.4 Z" fill="#f5f5f5"/><rect x="608.2" y="1058.2" width="4" height="4" fill="#f25022"/><rect x="613" y="1058.2" width="4" height="4" fill="#7fba00"/><rect x="608.2" y="1063" width="4" height="4" fill="#00a4ef"/><rect x="613" y="1063" width="4" height="4" fill="#ffb900"/>
<path d="M650,1056 L662,1048.8 L674,1056 L674,1070.8 L650,1070.8 Z" fill="#1470c4"/><path d="M653.6,1055.6 H670.4 L662,1063.6 Z" fill="#fff"/><path d="M650,1056.4 L662,1064.4 L674,1056.4 L674,1070.8 L650,1070.8 Z" fill="url(#tgMail)"/><path d="M650,1070.8 L662,1062.6 L674,1070.8 Z" fill="#45c2f6" opacity="0.75"/>
<rect x="699.4" y="1050.8" width="21.6" height="17.6" fill="#050505" stroke="#9a9a9a" stroke-width="1"/><rect x="699.9" y="1051.3" width="20.6" height="1.6" fill="#c8c8c8"/>
<text x="701.4" y="1058.6" font-family="Liberation Mono, monospace" font-size="4.6" fill="#e8e8e8">C:\_</text>
<path d="M760.0,1072.0L749.4,1065.9L749.4,1053.7L760.0,1047.6L770.6,1053.7L770.6,1065.9Z" fill="#2c3442" stroke="#6e7a90" stroke-width="1.4"/>
<path d="M752.6,1064.6 L765.6,1054.6 L767,1055.8 Z" fill="#2a78e0"/><path d="M752.6,1064.6 L760,1060 L759,1059 Z" fill="#c08a58"/>
<rect x="798.8" y="1052" width="20.2" height="15" fill="#f0f0f0"/><rect x="798.8" y="1052" width="20.2" height="1.8" fill="#fafafa"/><rect x="804.4" y="1054.8" width="8" height="10.6" fill="#0f78e6"/><path d="M800.4,1056.4 H803 M800.4,1059 H803 M800.4,1061.6 H803 M800.4,1064 H803 M814,1056.4 H817.6 M814,1059 H817.6 M814,1061.6 H817.6 M814,1064 H817.6" stroke="#b8a8a0" stroke-width="0.9"/>
<path d="M847.6,1053.4 L856,1048.6 L867.6,1050.6 L868.6,1063 L860,1067.6 L848.6,1064.8 Z" fill="#d01818"/><path d="M847.6,1053.4 L856,1048.6 L867.6,1050.6 L859.4,1055.4 Z" fill="#ee3a30"/>
<text x="849" y="1064.2" font-family="Liberation Sans, sans-serif" font-size="11" font-weight="bold" fill="#fff" textLength="17.4" lengthAdjust="spacingAndGlyphs">SW</text>
<text x="851.6" y="1071.6" font-family="Liberation Sans, sans-serif" font-size="8.4" font-weight="bold" fill="#fff" stroke="#1b2a47" stroke-width="0.3" textLength="17.6" lengthAdjust="spacingAndGlyphs">2021</text>
<rect x="691.2" y="1078" width="31.2" height="2" fill="#76b9ed"/><rect x="723.2" y="1078" width="6.8" height="2" fill="#5f94c4"/>
<rect x="740.0" y="1078" width="40.0" height="2" fill="#76b9ed"/>
<rect x="789.0" y="1078" width="39.8" height="2" fill="#76b9ed"/>
<rect x="838.0" y="1078" width="40.0" height="2" fill="#76b9ed"/>
<path d="M1689.4,1063 L1695.2,1057 L1701,1063" fill="none" stroke="#fff" stroke-width="1.3"/>
<path d="M1711.6,1055 L1717,1052.6 L1723.4,1054.4 L1723.6,1061.6 L1717.6,1064 L1711.8,1062 Z" fill="#d61c1c"/><text x="1712.6" y="1061.4" font-family="Liberation Sans, sans-serif" font-size="6.4" font-weight="bold" fill="#fff">SW</text><path d="M1715.2,1062.6 L1718.6,1066 L1725.6,1058.6" fill="none" stroke="#2fd03a" stroke-width="2"/>
<g fill="none" stroke="#fff" stroke-width="1.2"><rect x="1738.4" y="1056.8" width="6.6" height="6.2" rx="1.2"/><path d="M1745.4,1059 L1748.6,1057.2 V1062.6 L1745.4,1060.8"/><path d="M1739,1054.2 C1741,1052.2 1745,1052.2 1747,1054.2 M1739,1065.6 C1741,1067.6 1745,1067.6 1747,1065.6"/></g>
<g fill="none" stroke="#fff" stroke-width="1.2"><path d="M1762.6,1066 C1762.8,1059.6 1767.6,1055 1774,1055"/><path d="M1766,1066 C1766.2,1061.4 1769.4,1058.4 1774,1058.4"/><path d="M1769.4,1066 C1769.6,1063.4 1771.4,1061.8 1774,1061.8"/></g><circle cx="1772.6" cy="1065.4" r="1.3" fill="#fff"/>
<g fill="none" stroke="#fff" stroke-width="1.1" stroke-linejoin="round"><path d="M1783.4,1057.6 H1786 L1789.4,1054.4 V1065.6 L1786,1062.4 H1783.4 Z"/><path d="M1791.6,1057.6 C1792.8,1059 1792.8,1061 1791.6,1062.4 M1793.8,1055.6 C1796,1058 1796,1062 1793.8,1064.4 M1796,1053.6 C1799.2,1057.2 1799.2,1062.8 1796,1066.4"/></g>
<path d="M1879.6,1052.2 H1895 V1063 H1886.4 L1883.6,1066.4 V1063 H1879.6 Z" fill="#fff"/><path d="M1882,1055 H1892.6 M1882,1057.4 H1892.6 M1882,1059.8 H1892.6" stroke="#1b2a47" stroke-width="0.9"/>
<circle cx="1894.4" cy="1067.6" r="7.6" fill="#1b2a47" stroke="#8a909c" stroke-width="1"/><text x="1894.4" y="1071.6" text-anchor="middle" font-family="Liberation Sans, sans-serif" font-size="10.5" font-weight="bold" fill="#fff">2</text>
<rect x="1915" y="1040" width="1" height="40" fill="#6a7388"/>
</svg>
</body>
</html>
